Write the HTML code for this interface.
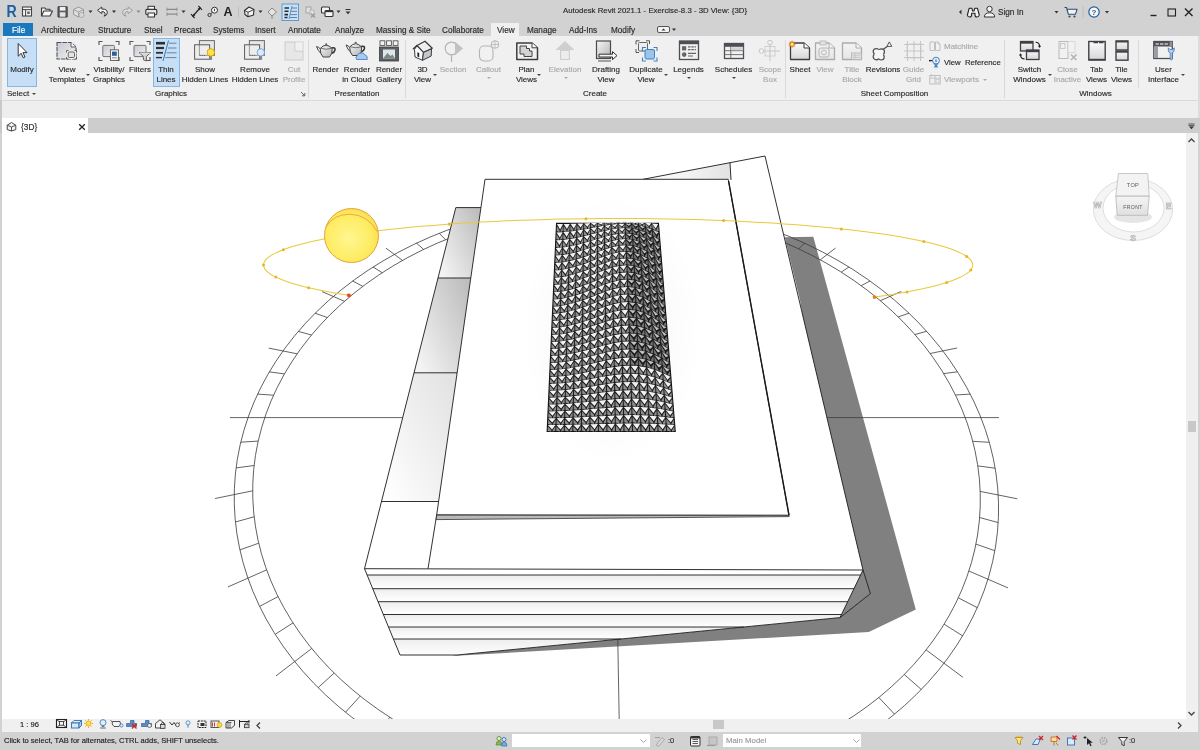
<!DOCTYPE html>
<html lang="en"><head><meta charset="utf-8"><title>Autodesk Revit 2021.1 - Exercise-8.3 - 3D View: {3D}</title>
<style>
html,body{margin:0;padding:0;}
body{width:1200px;height:750px;overflow:hidden;position:relative;background:#d2d2d2;-webkit-font-smoothing:antialiased;font-family:"Liberation Sans", sans-serif;font-size:8px;color:#2a2a2a;-webkit-text-stroke:0.15px currentColor;}
.a{position:absolute;}
.t{position:absolute;white-space:pre;line-height:10px;height:10px;}
.c{position:absolute;white-space:pre;line-height:10px;text-align:center;transform:translateX(-50%);}
.d{color:#a9a9a9;}
.sep{position:absolute;top:40px;height:58px;width:1px;background:#d9d9d9;}
.arr{position:absolute;width:0;height:0;border-left:2px solid transparent;border-right:2px solid transparent;border-top:2.5px solid #444;}
.arr.d{border-top-color:#aaa;}
.tab{position:absolute;top:24.5px;font-size:8.2px;line-height:11px;white-space:pre;}
svg{position:absolute;overflow:visible;}

</style></head><body><div id="app" style="position:absolute;left:0;top:0;width:1200px;height:750px;will-change:transform">
<div class="a" style="left:0;top:0;width:1200px;height:36px;background:#d2d2d2"></div>
<div class="a" style="left:0;top:36px;width:1200px;height:64px;background:#f0f0f0"></div>
<div class="a" style="left:0;top:100px;width:1200px;height:1px;background:#dadada"></div>
<div class="a" style="left:0;top:101px;width:1200px;height:17px;background:#eeeeee"></div>
<div class="a" style="left:0;top:118px;width:1200px;height:15px;background:#cdcdcd"></div>
<div class="a" style="left:0;top:133px;width:1200px;height:586px;background:#ffffff"></div>
<div class="t" style="left:563px;top:5.5px;font-size:7.8px">Autodesk Revit 2021.1 - Exercise-8.3 - 3D View: {3D}</div>
<div class="t" style="left:998px;top:8px;font-size:8.2px">Sign In</div>
<svg style="left:0;top:0.8px" width="1200" height="22" viewBox="0 0 1200 22"><text x="6.6" y="15.8" font-family="Liberation Sans, sans-serif" font-size="15.6" font-weight="bold" fill="#1b5f9b" textLength="10.2" lengthAdjust="spacingAndGlyphs">R</text><rect x="22.5" y="6" width="9" height="9" fill="#f5f5f5" stroke="#444" stroke-width="1.1"/><path d="M22.5 8.6h9M25.6 8.6V15" stroke="#444" stroke-width="1"/><rect x="27.2" y="10.4" width="2.6" height="2.6" fill="#666"/><path d="M41.5 15V7H45L46 8.3H50V10" fill="#f0f0f0" stroke="#3c3c3c" stroke-width="1.1" stroke-linejoin="round"/><path d="M41.5 15L43.8 10H52.5L50 15Z" fill="#f7f7f7" stroke="#3c3c3c" stroke-width="1.1" stroke-linejoin="round"/><path d="M58 5.8H67.2V16H58Z" fill="#5c5f66" stroke="#3b3d42" stroke-width="1"/><rect x="59.8" y="6" width="5.6" height="3.6" fill="#f1f1f1"/><rect x="59.8" y="11.3" width="5.6" height="4.4" fill="#e4e4e4"/><g opacity="0.45"><path d="M73.5 8.5L78.5 6L83.5 8.5V13.5L78.5 16L73.5 13.5Z" fill="#e9e9e9" stroke="#555" stroke-width="1"/><path d="M73.5 8.5L78.5 11L83.5 8.5M78.5 11V16" fill="none" stroke="#555" stroke-width="0.9"/><circle cx="81.5" cy="14" r="2.6" fill="#ddd" stroke="#666" stroke-width="0.8"/></g><path d="M88.5 9.5h4l-2 2.4z" fill="#333"/><path d="M97.5 9.3L101.8 6V8.1Q107.5 7.6 107.3 12Q107 14.6 104 15.2Q105.5 13.6 105 12Q104.5 10.3 101.8 10.6V12.6Z" fill="#f2f2f2" stroke="#3a3a3a" stroke-width="1" stroke-linejoin="round"/><path d="M112 9.5h4l-2 2.4z" fill="#333"/><g opacity="0.35"><path d="M132.5 9.3L128.2 6V8.1Q122.5 7.6 122.7 12Q123 14.6 126 15.2Q124.5 13.6 125 12Q125.5 10.3 128.2 10.6V12.6Z" fill="#f2f2f2" stroke="#3a3a3a" stroke-width="1" stroke-linejoin="round"/></g><path d="M136.5 9.5h4l-2 2.4z" fill="#888"/><rect x="148" y="5.3" width="6.5" height="3.5" fill="#fafafa" stroke="#333" stroke-width="1"/><rect x="145.8" y="8.4" width="11" height="5.4" rx="1.2" fill="#e6e6e6" stroke="#333" stroke-width="1.1"/><rect x="148" y="12" width="6.5" height="4" fill="#fafafa" stroke="#333" stroke-width="1"/><g opacity="0.5"><path d="M167 8.3h10M167 13.2h10" stroke="#444" stroke-width="1.2"/><path d="M167 6.6v3.4M177 6.6v3.4M167 11.5v3.4M177 11.5v3.4" stroke="#444" stroke-width="0.9"/></g><path d="M181.5 9.5h4l-2 2.4z" fill="#333"/><path d="M192.5 15.5L200.5 6.5" stroke="#222" stroke-width="1.2"/><path d="M191 13.2L194.6 17M198.4 5L202 8.8" stroke="#222" stroke-width="1.1"/><path d="M193 15L193.2 12.8L195.2 14.8ZM200 7L199.8 9.2L197.8 7.2Z" fill="#222"/><circle cx="214.5" cy="9.2" r="3" fill="#f5f5f5" stroke="#333" stroke-width="1"/><path d="M214.5 7.8v2.4" stroke="#333" stroke-width="0.9"/><circle cx="209.5" cy="14" r="1.6" fill="none" stroke="#333" stroke-width="1"/><path d="M210.6 12.9L212.4 11.4" stroke="#333" stroke-width="1"/><text x="228" y="15.2" font-family="Liberation Sans, sans-serif" font-size="12.5" font-weight="bold" fill="#222" text-anchor="middle">A</text><path d="M238.5 5.5v11" stroke="#bdbdbd" stroke-width="1"/><path d="M244.5 9.5L249 6L254 8.6L253.5 14L248 15.8L245 13.5Z" fill="#f4f4f4" stroke="#2f2f2f" stroke-width="1.1" stroke-linejoin="round"/><path d="M244.5 9.5L248 11.2L254 8.6M248 11.2V15.8" fill="none" stroke="#2f2f2f" stroke-width="0.9"/><path d="M258.5 9.5h4l-2 2.4z" fill="#333"/><g opacity="0.6"><path d="M268 11L272 7L276.5 11L272 15Z" fill="#f1f1f1" stroke="#555" stroke-width="1"/><path d="M272 15V18" stroke="#555" stroke-width="1"/></g><rect x="282" y="3" width="16.5" height="16.5" fill="#c9e0f7" stroke="#5b9bd5" stroke-width="1"/><path d="M284.5 7h4.5M284.5 10.3h4M284.5 13.6h3.5M284.5 16.5h3" stroke="#2b2b2b" stroke-width="1.6"/><path d="M292 5L289 18" stroke="#3b78b5" stroke-width="0.8"/><path d="M292 7h5M291.3 10.3h5.7M290.5 13.6h6.5M290 16.5h7" stroke="#48688c" stroke-width="0.8"/><g opacity="0.4"><rect x="306" y="6" width="5" height="6" fill="#f5f5f5" stroke="#555" stroke-width="0.9"/><rect x="310" y="9" width="4" height="5" fill="#f5f5f5" stroke="#777" stroke-width="0.7"/><path d="M311 12.5L315 16.5M315 12.5L311 16.5" stroke="#444" stroke-width="1.1"/></g><rect x="321.5" y="6" width="8" height="6" rx="1" fill="#f5f5f5" stroke="#333" stroke-width="1.1"/><rect x="325" y="9.5" width="8" height="6" rx="1" fill="#f5f5f5" stroke="#333" stroke-width="1.1"/><path d="M325 10.5h8" stroke="#333" stroke-width="1.3"/><path d="M336.5 9.5h4l-2 2.4z" fill="#333"/><path d="M345.5 8.5h5" stroke="#333" stroke-width="1"/><path d="M345.5 10.5h5l-2.5 2.8z" fill="#333"/><path d="M961.5 8.5L959 11L961.5 13.5Z" fill="#333"/><path d="M969.2 7.2h2.6L972.6 10H974L974.8 7.2h2.6L979.3 14Q979 16 977 16Q975 16 975 14V12.3H971.6V14Q971.6 16 969.6 16Q967.6 16 967.4 14Z" fill="#f3f3f3" stroke="#222" stroke-width="1.1" stroke-linejoin="round"/><circle cx="989.5" cy="8" r="2.7" fill="#f6f6f6" stroke="#333" stroke-width="1"/><path d="M984.3 16Q984.5 11.8 989.5 11.8Q994.5 11.8 994.7 16Z" fill="#f6f6f6" stroke="#333" stroke-width="1"/><path d="M1054.5 10h4l-2 2.4z" fill="#333"/><path d="M1064.5 6.5H1066.5L1068.3 13.2H1075.5L1077 8.3H1067" fill="#f3f3f3" stroke="#2a4e77" stroke-width="1.1" stroke-linejoin="round"/><circle cx="1069.5" cy="15.5" r="1.1" fill="#2a4e77"/><circle cx="1074.5" cy="15.5" r="1.1" fill="#2a4e77"/><path d="M1083 5.5v11" stroke="#bdbdbd" stroke-width="1"/><circle cx="1094" cy="11" r="5.2" fill="#f8f8f8" stroke="#1f5c99" stroke-width="1.2"/><text x="1094" y="14" font-family="Liberation Sans, sans-serif" font-size="8" font-weight="bold" fill="#1f5c99" text-anchor="middle">?</text><path d="M1105 10h4l-2 2.4z" fill="#333"/><path d="M1150.5 14.5h6" stroke="#222" stroke-width="1.4"/><rect x="1168" y="8" width="7.5" height="7" fill="none" stroke="#222" stroke-width="1.1"/><path d="M1185 7.5L1192.5 15M1192.5 7.5L1185 15" stroke="#222" stroke-width="1.4"/></svg>
<div class="a" style="left:3px;top:23px;width:30px;height:13px;background:#1c78bd"></div>
<div class="tab" style="left:12px;color:#fff">File</div>
<div class="a" style="left:491px;top:23px;width:28px;height:13px;background:#f0f0f0"></div>
<div class="tab" style="left:41px">Architecture</div>
<div class="tab" style="left:98px">Structure</div>
<div class="tab" style="left:144px">Steel</div>
<div class="tab" style="left:174px">Precast</div>
<div class="tab" style="left:213px">Systems</div>
<div class="tab" style="left:255px">Insert</div>
<div class="tab" style="left:288px">Annotate</div>
<div class="tab" style="left:335px">Analyze</div>
<div class="tab" style="left:376px">Massing &amp; Site</div>
<div class="tab" style="left:442px">Collaborate</div>
<div class="tab" style="left:497px">View</div>
<div class="tab" style="left:527px">Manage</div>
<div class="tab" style="left:569px">Add-Ins</div>
<div class="tab" style="left:611px">Modify</div>
<svg style="left:656px;top:26px" width="24" height="8" viewBox="0 0 24 8"><rect x="1.5" y="0.5" width="12" height="6" rx="1.5" fill="#f4f4f4" stroke="#444" stroke-width="0.9"/><path d="M5.5 4.6 L7.5 2.4 L9.5 4.6Z" fill="#333"/><path d="M16 2.5h4l-2 2.5z" fill="#333"/></svg>
<div class="a" style="left:7px;top:38px;width:28px;height:46.5px;background:#c6dff6;border:1px solid #86b7e4;box-sizing:content-box"></div>
<div class="a" style="left:153px;top:38px;width:24.5px;height:46.5px;background:#c6dff6;border:1px solid #86b7e4"></div>
<div class="sep" style="left:308px"></div>
<div class="sep" style="left:405px"></div>
<div class="sep" style="left:785px"></div>
<div class="sep" style="left:1004px"></div>
<div class="sep" style="left:1138px;height:48px"></div>
<div class="a" style="left:1198px;top:36px;width:2px;height:82px;background:#dcdcdc"></div>
<div class="a" style="left:0;top:36px;width:2px;height:64px;background:#d9d9d9"></div>
<div class="a" style="left:0;top:100px;width:2px;height:33px;background:#c9c9c9"></div>
<div class="c" style="left:22px;top:65px">Modify</div>
<svg width="0" height="0" style="left:0;top:0"><defs><linearGradient id="ig" x1="0" y1="0" x2="1" y2="1"><stop offset="0" stop-color="#f6f6f6"/><stop offset="1" stop-color="#b4b4b4"/></linearGradient><linearGradient id="ig2" x1="0" y1="0" x2="0" y2="1"><stop offset="0" stop-color="#fafafa"/><stop offset="1" stop-color="#d6d6d6"/></linearGradient><linearGradient id="ig3" x1="0" y1="0" x2="1" y2="1"><stop offset="0" stop-color="#c6cbd3"/><stop offset="1" stop-color="#f0f0f0"/></linearGradient></defs></svg><svg style="left:10px;top:39px" width="24" height="24" viewBox="0 0 24 24"><path d="M8.2 4.5V17.2L11.2 14.3L13.2 18.8L15 18L13 13.6H17Z" fill="#fff" stroke="#333" stroke-width="1" stroke-linejoin="round"/></svg>
<div class="c" style="left:67px;top:65px">View<br>Templates</div>
<div class="arr" style="left:85.5px;top:73.5px"></div>
<svg style="left:55px;top:39px" width="24" height="24" viewBox="0 0 24 24"><path d="M2 3.5H16L21 8V20H2Z" fill="url(#ig3)" stroke="#555" stroke-width="1.1" stroke-dasharray="4.5 0.9"/><path d="M16 3.5V8H21" fill="#f6f6f6" stroke="#555" stroke-width="0.9"/><rect x="11.5" y="11.5" width="9.5" height="8.5" fill="#f0f0f0"/><rect x="13.2" y="13" width="6.3" height="5.5" rx="1.3" fill="#e4e4e4" stroke="#555" stroke-width="0.9"/><path d="M11.5 13.5V11.5H13.5M19.5 11.5H21.5V13.5M21.5 18V20H19.5M13.5 20H11.5V18" fill="none" stroke="#555" stroke-width="0.9"/></svg>
<div class="c" style="left:109px;top:65px">Visibility/<br>Graphics</div>
<svg style="left:97px;top:39px" width="24" height="24" viewBox="0 0 24 24"><path d="M2 6V2.5H5.5M18.5 2.5H22V6M22 18V21.5H18.5M5.5 21.5H2V18" fill="none" stroke="#555" stroke-width="1.1"/><rect x="5.8" y="6.4" width="11.6" height="11.2" rx="1" fill="url(#ig3)" stroke="#666" stroke-width="0.9"/><rect x="13.4" y="10.8" width="8" height="10.6" fill="#f7f7f7" stroke="#555" stroke-width="0.9"/><rect x="15" y="12.6" width="4.8" height="4.2" fill="#2f5f9a"/><path d="M15 18.8h4.8" stroke="#777" stroke-width="0.9"/></svg>
<div class="c" style="left:140px;top:65px">Filters</div>
<svg style="left:128px;top:39px" width="24" height="24" viewBox="0 0 24 24"><path d="M2 6V2.5H5.5M18.5 2.5H22V6M22 18V21.5H18.5M5.5 21.5H2V18" fill="none" stroke="#555" stroke-width="1.1"/><rect x="6" y="6.4" width="12" height="11.2" rx="1" fill="url(#ig3)" stroke="#666" stroke-width="0.9"/><path d="M11.2 13.6H22.6L18.4 17.6V22L15.4 20.8V17.6Z" fill="#d4d4d4" stroke="#555" stroke-width="0.9" stroke-linejoin="round"/><path d="M12 14.1h9.8" stroke="#f6f6f6" stroke-width="0.8"/></svg>
<div class="c" style="left:166px;top:65px">Thin<br>Lines</div>
<svg style="left:154px;top:39px" width="24" height="24" viewBox="0 0 24 24"><path d="M2 4.2h9" stroke="#2e2e2e" stroke-width="2.6"/><path d="M2 9h8" stroke="#2e2e2e" stroke-width="2.2"/><path d="M2 13.8h7" stroke="#2e2e2e" stroke-width="1.8"/><path d="M2 18.6h6" stroke="#2e2e2e" stroke-width="1.4"/><path d="M14.5 1.5L9 22" stroke="#3b78b5" stroke-width="1"/><path d="M15 4.2h7.5M14 9h8.5M12.6 13.8h10M11.3 18.6h11.2" stroke="#4a6d92" stroke-width="0.8"/></svg>
<div class="c" style="left:205px;top:65px">Show<br>Hidden Lines</div>
<svg style="left:193px;top:39px" width="24" height="24" viewBox="0 0 24 24"><rect x="6.4" y="1.6" width="15" height="14.8" fill="#e6e6e6" stroke="#6a6a6a" stroke-width="1"/><rect x="1.6" y="5.8" width="15" height="14.4" fill="#ededed" fill-opacity="0.85" stroke="#5a5a5a" stroke-width="1"/><path d="M6.4 5.8V16.4H16.6" fill="none" stroke="#8a8a8a" stroke-width="0.8"/><path d="M6.5 16.4H13" stroke="#555" stroke-width="0.8" stroke-dasharray="1.2 1"/><rect x="16.5" y="16.5" width="2.6" height="4.6" rx="0.8" fill="#8a8a8a"/><circle cx="17.8" cy="13.4" r="3.7" fill="#ffe24a" stroke="#d6a400" stroke-width="0.9"/></svg>
<div class="c" style="left:255px;top:65px">Remove<br>Hidden Lines</div>
<svg style="left:243px;top:39px" width="24" height="24" viewBox="0 0 24 24"><rect x="6.4" y="1.6" width="15" height="14.8" fill="#e6e6e6" stroke="#6a6a6a" stroke-width="1"/><rect x="1.6" y="5.8" width="15" height="14.4" fill="#ededed" fill-opacity="0.85" stroke="#5a5a5a" stroke-width="1"/><path d="M6.4 5.8V16.4H16.6" fill="none" stroke="#8a8a8a" stroke-width="0.8"/><path d="M6.5 16.4H13" stroke="#555" stroke-width="0.8" stroke-dasharray="1.2 1"/><rect x="16.5" y="16.5" width="2.6" height="4.6" rx="0.8" fill="#8a8a8a"/><circle cx="17.8" cy="13.4" r="3.7" fill="#dbe9fa" stroke="#6f9fd6" stroke-width="0.9"/></svg>
<div class="c d" style="left:294px;top:65px">Cut<br>Profile</div>
<svg style="left:282px;top:39px" width="24" height="24" viewBox="0 0 24 24" opacity="0.38"><rect x="3" y="3" width="18" height="18" fill="#dadada" stroke="#8a8a8a" stroke-width="0.9"/><path d="M13 3V12H21" fill="none" stroke="#777" stroke-width="0.9"/><rect x="13.4" y="3.4" width="7.2" height="8.2" fill="#f2f2f2"/></svg>
<div class="c" style="left:325.5px;top:65px">Render</div>
<svg style="left:313.5px;top:39px" width="24" height="24" viewBox="0 0 24 24"><path d="M6 9.5Q4.5 8 2.5 7.5Q4 12 7 14.5" fill="#f4f4f4" stroke="#444" stroke-width="1"/><path d="M17.5 9Q21.5 8 21 11Q20.5 13.5 17.5 14.5" fill="none" stroke="#333" stroke-width="1.5"/><path d="M6.2 9.5Q6 15 9 18H15.5Q18.6 15 18.2 9.5Q15 6.3 12.2 6.2Q9 6.3 6.2 9.5Z" fill="url(#ig)" stroke="#444" stroke-width="1"/><path d="M7 9.3Q12.2 11.2 17.6 9.3" fill="none" stroke="#555" stroke-width="0.8"/><circle cx="12.2" cy="5.3" r="1.1" fill="#666"/></svg>
<div class="c" style="left:357px;top:65px">Render<br>in Cloud</div>
<svg style="left:345px;top:39px" width="24" height="24" viewBox="0 0 24 24"><g transform="translate(-1.5,-1.5)"><path d="M6 9.5Q4.5 8 2.5 7.5Q4 12 7 14.5" fill="#f4f4f4" stroke="#444" stroke-width="1"/><path d="M17.5 9Q21.5 8 21 11Q20.5 13.5 17.5 14.5" fill="none" stroke="#333" stroke-width="1.5"/><path d="M6.2 9.5Q6 15 9 18H15.5Q18.6 15 18.2 9.5Q15 6.3 12.2 6.2Q9 6.3 6.2 9.5Z" fill="url(#ig)" stroke="#444" stroke-width="1"/><path d="M7 9.3Q12.2 11.2 17.6 9.3" fill="none" stroke="#555" stroke-width="0.8"/><circle cx="12.2" cy="5.3" r="1.1" fill="#666"/></g><path d="M11.5 20.5Q9.8 18 12.4 16.6Q13 13.6 16.2 14.2Q18.6 13 19.8 15.8Q22.8 16.2 22.3 20.5Z" fill="#a9c8ee" stroke="#4c83c7" stroke-width="0.9"/></svg>
<div class="c" style="left:389px;top:65px">Render<br>Gallery</div>
<svg style="left:377px;top:39px" width="24" height="24" viewBox="0 0 24 24"><rect x="2.5" y="8" width="19" height="14" fill="#5b5f66" stroke="#3b3b3b" stroke-width="0.8"/><rect x="3" y="1.8" width="4.8" height="4.6" fill="#f3f3f3" stroke="#555" stroke-width="0.9"/><rect x="9.6" y="1.8" width="4.8" height="4.6" fill="#f3f3f3" stroke="#555" stroke-width="0.9"/><rect x="16.2" y="1.8" width="4.8" height="4.6" fill="#f3f3f3" stroke="#555" stroke-width="0.9"/><rect x="6" y="10.5" width="12" height="9" fill="#dfe6ea"/><path d="M6 19.5L10.5 14L13.5 17L15.5 15.5L18 19.5Z" fill="#7b8a80"/></svg>
<div class="c" style="left:422.5px;top:65px">3D<br>View</div>
<div class="arr" style="left:432.5px;top:73.5px"></div>
<svg style="left:410.5px;top:39px" width="24" height="24" viewBox="0 0 24 24"><path d="M6 6.5L3.5 10.5L4 18L11.5 21.3L12.5 13.2Z" fill="#fbfbfb" stroke="#3a3a3a" stroke-width="1" stroke-linejoin="round"/><path d="M12.5 13.2L20.5 9.7L20.2 17L11.5 21.3Z" fill="#c4c7cc" stroke="#3a3a3a" stroke-width="1" stroke-linejoin="round"/><path d="M6 6.5L14 2.2L21.3 9.2L12.5 13.3Z" fill="#eceef0" stroke="#3a3a3a" stroke-width="1.2" stroke-linejoin="round"/><path d="M6 6.5L2.4 9.8" stroke="#3a3a3a" stroke-width="1.5" stroke-linecap="round"/><rect x="6.4" y="13.3" width="1.8" height="4.4" fill="#1e1e1e" transform="skewY(22) translate(0,-2.7)"/></svg>
<div class="c d" style="left:453px;top:65px">Section</div>
<svg style="left:441px;top:39px" width="24" height="24" viewBox="0 0 24 24" opacity="0.38"><circle cx="10.5" cy="9.5" r="6.3" fill="#f2f2f2" stroke="#555" stroke-width="1.2"/><path d="M14 2.8L22 9.5L14 16.2Z" fill="#777"/><path d="M10.5 16V23" stroke="#555" stroke-width="1.2"/></svg>
<div class="c d" style="left:488.5px;top:65px">Callout</div>
<div class="arr d" style="left:486.5px;top:77px"></div>
<svg style="left:476.5px;top:39px" width="24" height="24" viewBox="0 0 24 24" opacity="0.38"><rect x="2.5" y="7" width="13.5" height="15" rx="4.5" fill="#f3f3f3" stroke="#555" stroke-width="1.1"/><circle cx="18" cy="5.5" r="3.8" fill="#f3f3f3" stroke="#555" stroke-width="1"/><path d="M14.2 5.5h7.6M18 1.7v7.6" stroke="#555" stroke-width="0.8"/></svg>
<div class="c" style="left:526.5px;top:65px">Plan<br>Views</div>
<div class="arr" style="left:537px;top:73.5px"></div>
<svg style="left:514.5px;top:39px" width="24" height="24" viewBox="0 0 24 24"><path d="M1.8 4H17L22.5 8.8V20.5H1.8Z" fill="#f1f1f1" stroke="#3d3d3d" stroke-width="1.5" stroke-linejoin="round"/><path d="M17 4V8.8H22.5" fill="#fff" stroke="#3d3d3d" stroke-width="1"/><path d="M5 7H11.5V9.5H14.5V12H17V17.5H9V15H5Z" fill="#d4d4d4" stroke="#444" stroke-width="1"/></svg>
<div class="c d" style="left:565px;top:65px">Elevation</div>
<div class="arr d" style="left:564px;top:77px"></div>
<svg style="left:553px;top:39px" width="24" height="24" viewBox="0 0 24 24" opacity="0.38"><path d="M12 2L21.5 11H17V21H7V11H2.5Z" fill="#9a9a9a"/><rect x="8.2" y="12" width="7.6" height="8" fill="#e9e9e9"/></svg>
<div class="c" style="left:606px;top:65px">Drafting<br>View</div>
<svg style="left:594px;top:39px" width="24" height="24" viewBox="0 0 24 24"><rect x="2.5" y="2" width="14" height="17.5" fill="url(#ig)" stroke="#4a4a4a" stroke-width="1.2"/><path d="M4 22H17" stroke="#555" stroke-width="1"/><path d="M5 15.2H18.5V12.6L23 16.6L18.5 20.6V18H5Z" fill="#f5f5f5" stroke="#333" stroke-width="1" stroke-linejoin="round"/></svg>
<div class="c" style="left:646px;top:65px">Duplicate<br>View</div>
<div class="arr" style="left:664px;top:73.5px"></div>
<svg style="left:634px;top:39px" width="24" height="24" viewBox="0 0 24 24"><rect x="4.5" y="3.5" width="9" height="8.5" rx="1" fill="#eee" stroke="#666" stroke-width="1"/><path d="M2 5.5V1.8H5.5M12 1.8H15.5V5" fill="none" stroke="#555" stroke-width="1"/><path d="M2 10V13.5H5" fill="none" stroke="#555" stroke-width="1"/><rect x="11" y="10.5" width="9.5" height="9.5" rx="1.5" fill="#9cc3ea" stroke="#3f82c4" stroke-width="1"/><path d="M8.5 12.5V8.5H12M19.5 8.5H23V12M23 18.5V22H19.5M12 22H8.5V18.5" fill="none" stroke="#3f82c4" stroke-width="1.1"/></svg>
<div class="c" style="left:688.5px;top:65px">Legends</div>
<div class="arr" style="left:687px;top:77px"></div>
<svg style="left:676.5px;top:39px" width="24" height="24" viewBox="0 0 24 24"><rect x="2.5" y="2" width="19" height="18.5" fill="#f1f1f1" stroke="#4d4f55" stroke-width="1.3"/><rect x="2.5" y="2" width="19" height="3.2" fill="#4d4f55"/><rect x="5" y="7.2" width="4.2" height="4.2" fill="#666"/><path d="M11 7.8h8M11 10.6h8" stroke="#666" stroke-width="1.2" stroke-dasharray="2.5 0.8"/><circle cx="7.2" cy="15.6" r="2.3" fill="#666"/><path d="M11 14.4h8M11 17h5" stroke="#666" stroke-width="1.1"/></svg>
<div class="c" style="left:733.5px;top:65px">Schedules</div>
<div class="arr" style="left:731.5px;top:77px"></div>
<svg style="left:721.5px;top:39px" width="24" height="24" viewBox="0 0 24 24"><rect x="2.5" y="4.5" width="19" height="15" fill="#f1f1f1" stroke="#4d4f55" stroke-width="1.3"/><rect x="2.5" y="4.5" width="19" height="3.3" fill="#4d4f55"/><path d="M2.5 11.7h19M2.5 15.6h19M8.8 7.8v11.7" stroke="#666" stroke-width="0.9"/><rect x="9.3" y="8.2" width="11.8" height="3" fill="#cfd3da"/></svg>
<div class="c d" style="left:770px;top:65px">Scope<br>Box</div>
<svg style="left:758px;top:39px" width="24" height="24" viewBox="0 0 24 24" opacity="0.38"><path d="M2 12H22M12 4V22" stroke="#777" stroke-width="0.9"/><circle cx="12" cy="3.6" r="2.3" fill="#f4f4f4" stroke="#777" stroke-width="0.9"/><circle cx="3.4" cy="12" r="2.3" fill="#f4f4f4" stroke="#777" stroke-width="0.9"/><rect x="7" y="7.5" width="10" height="9.5" fill="none" stroke="#888" stroke-width="0.8"/></svg>
<div class="c" style="left:800px;top:65px">Sheet</div>
<svg style="left:788px;top:39px" width="24" height="24" viewBox="0 0 24 24"><path d="M2.5 4H16L21.5 9V20.5H2.5Z" fill="url(#ig2)" stroke="#3d3d3d" stroke-width="1.3" stroke-linejoin="round"/><path d="M16 4V9H21.5" fill="#fff" stroke="#3d3d3d" stroke-width="1"/><g transform="translate(1.2,1.2) scale(0.72)"><path d="M4 0.8L5.1 3L7.4 2.2L6.6 4.5L8.8 5.6L6.6 6.7L7.4 9L5.1 8.2L4 10.4L2.9 8.2L0.6 9L1.4 6.7L-0.8 5.6L1.4 4.5L0.6 2.2L2.9 3Z" fill="#f39a1d" stroke="#c96d00" stroke-width="0.6"/><circle cx="4" cy="5.6" r="1.7" fill="#fff2c8"/></g></svg>
<div class="c d" style="left:825px;top:65px">View</div>
<svg style="left:813px;top:39px" width="24" height="24" viewBox="0 0 24 24" opacity="0.38"><path d="M2.5 4H16L21.5 9V20.5H2.5Z" fill="url(#ig2)" stroke="#3d3d3d" stroke-width="1.3" stroke-linejoin="round"/><path d="M16 4V9H21.5" fill="#fff" stroke="#3d3d3d" stroke-width="1"/><rect x="6" y="9" width="10" height="9" rx="2" fill="#e9e9e9" stroke="#555" stroke-width="1"/><circle cx="11" cy="13.5" r="2.4" fill="none" stroke="#555" stroke-width="0.9"/><rect x="7" y="2" width="6" height="4" fill="#ccc" stroke="#555" stroke-width="0.8"/></svg>
<div class="c d" style="left:852px;top:65px">Title<br>Block</div>
<svg style="left:840px;top:39px" width="24" height="24" viewBox="0 0 24 24" opacity="0.38"><path d="M2.5 4H16L21.5 9V20.5H2.5Z" fill="url(#ig2)" stroke="#3d3d3d" stroke-width="1.3" stroke-linejoin="round"/><path d="M16 4V9H21.5" fill="#fff" stroke="#3d3d3d" stroke-width="1"/><rect x="11.5" y="14" width="10" height="6.5" fill="#cfcfcf" stroke="#555" stroke-width="0.8"/><path d="M11.5 16.2h10M11.5 18.4h10M15 14v6.5" stroke="#666" stroke-width="0.6"/></svg>
<div class="c" style="left:883px;top:65px">Revisions</div>
<svg style="left:871px;top:39px" width="24" height="24" viewBox="0 0 24 24"><g fill="#f6f6f6" stroke="#4f4f4f" stroke-width="1.2"><circle cx="5.2" cy="12.6" r="3"/><circle cx="10.5" cy="12.8" r="3"/><circle cx="5.2" cy="17.8" r="3"/><circle cx="10.2" cy="18" r="3"/></g><path d="M5.2 10.8L10.5 11L12.2 15.3L10.2 19.4L5.2 19.2L3.6 15.3Z" fill="#f6f6f6"/><path d="M11.6 10.8L17.6 6.4" stroke="#4f4f4f" stroke-width="1.2"/><path d="M18.3 2.9L20.8 7.4H15.9Z" fill="#f6f6f6" stroke="#555" stroke-width="1" stroke-linejoin="round"/></svg>
<div class="c d" style="left:913.5px;top:65px">Guide<br>Grid</div>
<svg style="left:901.5px;top:39px" width="24" height="24" viewBox="0 0 24 24" opacity="0.38"><path d="M2 5.5H22M2 12H22M2 18.5H22M5.5 2V22M12 2V22M18.5 2V22" stroke="#777" stroke-width="0.9"/><rect x="4.5" y="4.5" width="15" height="15" fill="none" stroke="#888" stroke-width="0.6" stroke-dasharray="1.5 1"/></svg>
<div class="c" style="left:1029.5px;top:65px">Switch<br>Windows</div>
<div class="arr" style="left:1047.5px;top:73.5px"></div>
<svg style="left:1017.5px;top:39px" width="24" height="24" viewBox="0 0 24 24"><rect x="2.5" y="2.5" width="12.5" height="9.5" fill="url(#ig2)" stroke="#3f4146" stroke-width="1.3"/><rect x="2.5" y="2.5" width="12.5" height="2.2" fill="#3f4146"/><rect x="8.5" y="11" width="12.5" height="9.5" fill="url(#ig2)" stroke="#3f4146" stroke-width="1.3"/><rect x="8.5" y="11" width="12.5" height="2.2" fill="#3f4146"/><path d="M17.5 3.2Q21.6 3.2 21.6 7.6" fill="none" stroke="#222" stroke-width="1.1"/><path d="M19.9 6.8L21.6 9L23.2 6.8Z" fill="#222"/><path d="M6.6 20Q2.5 20 2.5 15.6" fill="none" stroke="#222" stroke-width="1.1"/><path d="M0.9 16.4L2.5 14.2L4.2 16.4Z" fill="#222"/></svg>
<div class="c d" style="left:1067.5px;top:65px">Close<br>Inactive</div>
<svg style="left:1055.5px;top:39px" width="24" height="24" viewBox="0 0 24 24" opacity="0.38"><rect x="3" y="2.5" width="9" height="17" fill="#f3f3f3" stroke="#666" stroke-width="1"/><rect x="4.5" y="4.5" width="4.5" height="5" fill="none" stroke="#777" stroke-width="0.8"/><rect x="12" y="2.5" width="7" height="11" fill="#f6f6f6" stroke="#999" stroke-width="0.7"/><path d="M15 15.5L20.5 21M20.5 15.5L15 21" stroke="#555" stroke-width="1.6"/></svg>
<div class="c" style="left:1096.5px;top:65px">Tab<br>Views</div>
<svg style="left:1084.5px;top:39px" width="24" height="24" viewBox="0 0 24 24"><rect x="3.8" y="2.5" width="16.4" height="18.5" fill="url(#ig2)" stroke="#3f4146" stroke-width="1.4"/><path d="M3.8 20.6h16.4" stroke="#3f4146" stroke-width="1.6"/><path d="M8.5 3.3h4.5M14 3.3h4.5" stroke="#3f4146" stroke-width="1.8"/></svg>
<div class="c" style="left:1121.5px;top:65px">Tile<br>Views</div>
<svg style="left:1109.5px;top:39px" width="24" height="24" viewBox="0 0 24 24"><rect x="6" y="2" width="12" height="9" fill="url(#ig2)" stroke="#3f4146" stroke-width="1.4"/><path d="M6 2.6h12" stroke="#3f4146" stroke-width="1.8"/><rect x="6" y="12.2" width="12" height="9" fill="url(#ig2)" stroke="#3f4146" stroke-width="1.4"/><path d="M6 12.8h12" stroke="#3f4146" stroke-width="1.8"/></svg>
<div class="c" style="left:1163.5px;top:65px">User<br>Interface</div>
<div class="arr" style="left:1180.5px;top:73.5px"></div>
<svg style="left:1151.5px;top:39px" width="24" height="24" viewBox="0 0 24 24"><rect x="1.8" y="2.5" width="18.5" height="17" fill="#f1f1f1" stroke="#4d4f55" stroke-width="1.3"/><rect x="1.8" y="2.5" width="18.5" height="5" fill="#4d4f55"/><path d="M3.5 5h3.4M8 5h3.4M12.5 5h3.4" stroke="#c9c9c9" stroke-width="1.3"/><rect x="2.4" y="7.5" width="3.6" height="11.5" fill="#9a9da3"/><rect x="17.5" y="2.5" width="2.8" height="5" fill="#8d9096"/><path d="M16.3 8.8V11.2Q16.3 13.3 18.2 13.8V20.4Q19.2 21.6 20.2 20.4V13.8Q22.2 13.3 22.2 11.2V8.8L20.6 10.6H17.9Z" fill="#b9d1ec" stroke="#4c7fb8" stroke-width="0.9" stroke-linejoin="round"/></svg>
<div class="t d" style="left:944px;top:42px">Matchline</div>
<div class="t" style="left:944px;top:58px;font-size:7.75px">View  Reference</div>
<div class="t d" style="left:944px;top:75px">Viewports</div>
<div class="arr d" style="left:983px;top:79px"></div>
<svg style="left:929px;top:40px" width="12" height="12" viewBox="0 0 12 12" opacity="0.38"><path d="M1 2H5.5V10.5H1ZM6.5 2H9L11 4V10.5H6.5Z" fill="#f3f3f3" stroke="#666" stroke-width="0.9"/><path d="M9 2V4H11" fill="none" stroke="#666" stroke-width="0.7"/></svg>
<svg style="left:929px;top:56px" width="12" height="12" viewBox="0 0 12 12"><circle cx="7" cy="4.6" r="3.4" fill="#eef4fb" stroke="#3f7cc0" stroke-width="1"/><path d="M7 3V6.2M5.8 5h2.4" stroke="#3f7cc0" stroke-width="0.8"/><path d="M0.3 4.6H3.4" stroke="#333" stroke-width="1.2"/><circle cx="0.9" cy="4.6" r="0.9" fill="#222"/><path d="M5.5 8L8.5 11.5M8.5 8L5.5 11.5" stroke="#3f7cc0" stroke-width="1.2"/></svg>
<svg style="left:929px;top:73px" width="12" height="12" viewBox="0 0 12 12" opacity="0.38"><rect x="0.8" y="2.5" width="10.4" height="8.5" fill="#f0f0f0" stroke="#666" stroke-width="0.9"/><path d="M2.5 1V3.5M6 2.5V11M0.8 5.2H11.2" stroke="#666" stroke-width="0.8"/><rect x="7" y="6.3" width="3" height="3" fill="none" stroke="#777" stroke-width="0.6"/></svg>
<div class="c" style="left:171px;top:89px">Graphics</div>
<div class="c" style="left:357px;top:89px">Presentation</div>
<div class="c" style="left:595px;top:89px">Create</div>
<div class="c" style="left:894.5px;top:89px">Sheet Composition</div>
<div class="c" style="left:1095.5px;top:89px">Windows</div>
<div class="t" style="left:7px;top:89px">Select</div>
<div class="arr" style="left:32px;top:93px"></div>
<svg style="left:300px;top:91px" width="6" height="6" viewBox="0 0 6 6"><path d="M1 1L4.5 4.5M4.8 2v2.8H2" stroke="#555" stroke-width="0.9" fill="none"/></svg>
<div class="a" style="left:2px;top:118px;width:86px;height:15px;background:#fff"></div>
<div class="t" style="left:21px;top:121.8px;font-size:8.3px">{3D}</div>
<svg style="left:5.5px;top:120.5px" width="11" height="11" viewBox="0 0 11 11"><path d="M1.2 4.2L5.5 1.5L9.8 4.2V8.6L5.5 10L1.2 8.6Z" fill="#f3f3f3" stroke="#444" stroke-width="1"/><path d="M1.2 4.2L5.5 6L9.8 4.2M5.5 6V10" fill="none" stroke="#444" stroke-width="0.9"/></svg>
<svg style="left:77.5px;top:122.8px" width="8" height="8" viewBox="0 0 8 8"><path d="M1.2 1.2L6.8 6.8M6.8 1.2L1.2 6.8" stroke="#222" stroke-width="1.3"/></svg>
<svg style="left:1188px;top:123px" width="7" height="7" viewBox="0 0 7 7"><path d="M0.5 1h6M0.5 2.6h6" stroke="#333" stroke-width="0.8"/><path d="M1 3.6h5L3.5 6.2z" fill="#333"/></svg>
<svg style="left:0;top:133px;overflow:hidden" width="1200" height="586" viewBox="0 133 1200 586">
<defs>
<linearGradient id="gs" x1="0" x2="1" y1="0.8" y2="0.1"><stop offset="0" stop-color="#f4f4f4"/><stop offset="1" stop-color="#bcbcbc"/></linearGradient>
<linearGradient id="gs2" x1="0" x2="1" y1="0.9" y2="0.1"><stop offset="0" stop-color="#ffffff"/><stop offset="1" stop-color="#e2e2e2"/></linearGradient>
<linearGradient id="gt" x1="0" x2="1" y1="0" y2="0"><stop offset="0" stop-color="#ffffff"/><stop offset="0.5" stop-color="#f4f4f4"/><stop offset="1" stop-color="#e2e2e2"/></linearGradient>
<linearGradient id="gf" x1="0" x2="0" y1="0" y2="1"><stop offset="0" stop-color="#ededed"/><stop offset="0.7" stop-color="#fafafa"/><stop offset="1" stop-color="#ffffff"/></linearGradient>
<radialGradient id="sun" cx="0.45" cy="0.55" r="0.6"><stop offset="0" stop-color="#fff690"/><stop offset="0.7" stop-color="#fdec62"/><stop offset="1" stop-color="#f8dc4c"/></radialGradient>
<radialGradient id="lsh" cx="0.5" cy="0.5" r="0.5"><stop offset="0.55" stop-color="#000" stop-opacity="0.02"/><stop offset="1" stop-color="#000" stop-opacity="0"/></radialGradient>
<linearGradient id="cube1" x1="0" x2="0" y1="0" y2="1"><stop offset="0" stop-color="#f4f4f4"/><stop offset="1" stop-color="#e0e0e0"/></linearGradient>
</defs>
<polygon points="784.8,237.3 813.3,236.8 915.8,609.6 868.8,632 452,656 700,600 840,560 800,300" fill="#808080"/>
<g fill="none" stroke="#3c3c3c" stroke-width="0.8"><ellipse cx="616.4" cy="503.2" rx="382.3" ry="301.7" transform="rotate(2.15 616.4 503.2)"/><ellipse cx="616.5" cy="495.3" rx="363.9" ry="287.2" transform="rotate(1.83 616.5 495.3)"/><path d="M955.5 395L970.2 394.1M943.7 373.6L957.4 371.8M930.1 353.5L957.1 348M914.9 334.5L926.6 331.3M898.2 316.9L909 313.2M880.3 300.7L901.3 291.4M861.2 285.7L870 281M841.2 272.1L849 267M820.3 259.8L835.5 248.1M798.6 248.8L804.7 243.2M776.3 239.2L781.5 233.4M753.4 230.8L763.3 217.6M730.2 223.8L733.8 217.7M706.5 218.1L709.4 211.8M682.6 213.6L687.3 199.6M658.5 210.5L659.9 204M634.3 208.6L634.9 202M585.8 208.7L584.9 202M561.7 210.7L560 203.9M537.8 213.9L532.4 199.6M514.1 218.4L510.7 211.7M490.7 224.2L486.5 217.5M467.8 231.3L457.1 217.6M445.4 239.7L439.3 233.3M423.6 249.4L416.5 243.1M402.5 260.4L386 248.2M382.2 272.7L373.1 267M362.8 286.3L352.7 281M344.5 301.3L322 291.6M327.3 317.5L315.1 313.2M311.5 335L298.3 331.4M297.1 353.8L268.7 348.1M284.4 373.9L269.3 371.9M273.6 395.2L257.6 394.1M258.2 441.1L240.8 442.2M254.1 465.5L236.1 467.9M252.7 490.8L215.1 498.5M254.1 516.8L235.4 522M258.7 543.2L239.9 549.9M266.6 569.9L228 586.9M278 596.6L259.6 606.4M293 622.9L275.2 634.3M311.7 648.5L276 675.9M334.1 673.1L318.1 687.7M360.2 696.1L345.5 712.2M389.8 717.2L361.9 754.5M422.6 736L411.3 754.9M458.4 752.1L449.1 772.1M496.6 765.1L481.5 809.7M536.7 774.6L532.1 796.3M578.2 780.5L576 802.7M662.5 780.8L665.5 803.2M703.9 775.2L709.4 797.2M743.8 765.9L760.5 810.7M781.8 753.2L792.1 773.7M817.2 737.3L829.6 756.7M849.7 718.6L879 756M878.8 697.5L894.5 714.1M904.3 674.5L921.3 689.5M926.1 649.9L962.9 677.3M944.1 624.2L962.7 635.9M958.3 597.8L977.3 607.7M968.9 571L1008 587.9M975.9 544.1L994.8 550.7M979.6 517.5L998.2 522.6M980.2 491.4L1017.3 498.8M977.8 465.9L995.2 468.2M972.7 441.3L989.3 442.3M613.8 417.6L998.9 417.6M613.8 417.6L609.7 189.4M613.8 417.6L230 417.6M613.8 417.6L621.1 825"/></g>
<polygon points="485,179.3 643,179.3 765,156 863,570 870.4,593.6 840,617.6 457,655 400,655 364.5,568.7 455.8,207.6 481,207.6" fill="#ffffff"/>
<polygon points="643,179.3 730,162.7 731,179.3" fill="url(#gt)"/>
<polygon points="455.8,207.6 480.9,207.6 470.8,278 438,278" fill="url(#gs)"/>
<polygon points="438,278 470.8,278 457.1,372.8 414,372.8" fill="url(#gs)"/>
<polygon points="414,372.8 457.1,372.8 438.6,501.5 381.4,501.5" fill="url(#gs2)"/>
<clipPath id="fc"><polygon points="364.5,568.7 863,570 840,617.6 457,655 400,655"/></clipPath>
<polygon points="364.5,568.7 863,570 840,617.6 457,655 400,655" fill="#f3f3f3"/>
<g clip-path="url(#fc)"><rect x="360" y="575" width="510" height="13.7" fill="url(#gf)"/><rect x="360" y="588.7" width="510" height="13" fill="url(#gf)"/><rect x="360" y="601.7" width="510" height="12.8" fill="url(#gf)"/><rect x="360" y="614.5" width="510" height="12.5" fill="url(#gf)"/><rect x="360" y="627" width="510" height="12" fill="url(#gf)"/><rect x="360" y="639" width="510" height="17" fill="url(#gf)"/></g>
<polygon points="364.5,568.7 863,570 860.6,575 367.1,575" fill="#ffffff"/>
<polygon points="863,570 870.4,593.6 840,617.6" fill="#858585"/>
<path d="M643 179.3L765 156L863 570L870.4 593.6L840 617.6L457 655L400 655L364.5 568.7L455.8 207.6L481 207.6M730 162.7L731 180M438 278L470.8 278M414 372.8L457.1 372.8M381.4 501.5L438.6 501.5M436.7 514.8L428 568.7M364.5 568.7L863 570M863 570L840 617.6M367.1 575L860.6 575M372.7 588.7L854 588.7M378.1 601.7L847.7 601.7M383.3 614.5L841.5 614.5M388.5 627L743.8 627M393.4 639L621 639" fill="none" stroke="#1a1a1a" stroke-width="0.9" stroke-linejoin="round"/>
<polygon points="436.7,514.8 789,515.2 789.2,516.6 436.2,519.6" fill="#b9b9b9" stroke="#1a1a1a" stroke-width="0.7"/>
<polygon points="485,179.3 728.2,179.3 789,515.2 436.7,514.8" fill="#ffffff" stroke="#1a1a1a" stroke-width="0.9" stroke-linejoin="round"/>
<path d="M728.6 181L789 515.2" stroke="#1a1a1a" stroke-width="1.4"/>
<ellipse cx="612" cy="330" rx="90" ry="135" fill="url(#lsh)"/>
<polygon points="556.6,223.3 658.4,223.3 675.2,431.4 547.2,431.4" fill="#1c1c1c" stroke="#141414" stroke-width="1.2"/>
<path d="M556.9 226L559.6 230.4L559.5 232.2L556.7 231.1ZM562.9 225.9L560.7 230.4L560.6 232.1L562.7 230.9ZM563.7 225.9L566.4 230L566.4 231.7L563.5 230.9ZM569.7 225.6L567.5 229.9L567.4 231.6L569.5 230.4ZM570.5 225.5L573.3 229.4L573.2 231L570.4 230.3ZM576.5 225.1L574.4 229.2L574.3 230.9L576.4 229.6ZM577.3 225.1L580.1 228.5L580.1 230L577.2 229.5ZM583.3 224.6L581.2 228.4L581.2 229.8L583.2 228.6ZM584.1 224.5L586.9 227.5L586.9 228.9L584.1 228.5ZM590.1 224L588 227.3L588 228.7L590.1 227.5ZM590.9 223.9L593.8 226.4L593.8 227.6L590.9 227.3ZM596.9 223.3L594.9 226.2L594.9 227.4L596.9 226.3ZM597.7 223.3L600.6 225.2L600.7 226.3L597.8 226.1ZM603.7 222.7L601.7 225.1L601.8 226.1L603.8 225.1ZM604.6 222.6L607.5 224.2L607.5 225.1L604.6 225ZM610.5 222.2L608.6 224L608.6 225L610.7 224.1ZM611.4 222.1L614.3 223.4L614.4 224.2L611.5 224ZM617.4 221.8L615.4 223.3L615.5 224.1L617.5 223.4ZM618.2 221.7L621.2 222.9L621.2 223.7L618.3 223.3ZM624.2 221.6L622.3 222.8L622.3 223.6L624.4 223.1ZM625 221.6L628 222.9L628.1 223.7L625.2 223.1ZM631 221.8L629.1 222.9L629.2 223.7L631.2 223.4ZM631.8 221.8L634.9 223.5L635 224.4L632 223.4ZM637.8 222.3L636 223.6L636.1 224.5L638.1 224.3ZM638.6 222.4L641.7 224.8L641.8 225.8L638.9 224.5ZM644.6 223.2L642.8 225L642.9 226.1L644.9 226ZM645.4 223.3L648.6 226.7L648.7 227.9L645.7 226.2ZM651.4 224.4L649.7 227L649.8 228.4L651.8 228.2ZM652.2 224.6L655.4 229.1L655.6 230.7L652.6 228.6ZM658.2 225.9L656.5 229.5L656.7 231.2L658.6 231ZM556.5 234.2L559.2 238.4L559.2 240.1L556.3 239.1ZM562.6 233.9L560.3 238.3L560.3 240L562.4 238.7ZM563.4 233.9L566.1 237.8L566.1 239.4L563.2 238.7ZM569.5 233.3L567.3 237.6L567.2 239.3L569.3 237.9ZM570.3 233.2L573.1 236.8L573 238.4L570.1 237.8ZM576.3 232.3L574.2 236.6L574.1 238.2L576.2 236.8ZM577.2 232.2L580 235.5L579.9 237L577.1 236.6ZM583.2 231.1L581.1 235.2L581.1 236.8L583.1 235.3ZM584 231L586.9 233.9L586.9 235.4L584 235.2ZM590.1 229.8L588 233.7L588 235.1L590.1 233.7ZM590.9 229.6L593.8 232.3L593.8 233.6L590.9 233.5ZM597 228.3L594.9 232L594.9 233.3L597 232ZM597.8 228.2L600.7 230.6L600.7 231.8L597.8 231.8ZM603.8 227L601.8 230.3L601.8 231.6L603.9 230.3ZM604.7 226.8L607.6 229L607.7 230.2L604.7 230.1ZM610.7 225.7L608.7 228.8L608.8 229.9L610.8 228.8ZM611.5 225.6L614.5 227.8L614.6 228.9L611.7 228.6ZM617.6 224.9L615.7 227.6L615.7 228.7L617.7 227.7ZM618.4 224.8L621.5 227L621.5 228.1L618.6 227.7ZM624.5 224.5L622.6 227L622.6 228L624.7 227.3ZM556.2 242L558.9 246.1L558.8 247.7L556 246.8ZM562.3 241.7L560 246L560 247.7L562.1 246.4ZM563.1 241.6L565.9 245.3L565.8 247L562.9 246.3ZM569.2 240.8L567 245.2L567 246.8L569.1 245.4ZM570.1 240.7L572.9 244.1L572.8 245.7L569.9 245.3ZM576.2 239.5L574 243.9L574 245.5L576.1 244ZM577 239.4L579.9 242.5L579.8 244.1L576.9 243.8ZM583.1 238L581 242.2L580.9 243.8L583.1 242.2ZM583.9 237.7L586.8 240.6L586.8 242.1L583.9 242ZM590.1 236.2L587.9 240.3L587.9 241.8L590 240.2ZM590.9 235.9L593.8 238.6L593.8 240L590.9 240ZM597 234.3L594.9 238.3L594.9 239.7L597 238.1ZM597.8 234L600.8 236.5L600.8 237.9L597.9 237.9ZM603.9 232.4L601.9 236.2L601.9 237.5L604 236.1ZM604.8 232.2L607.8 234.6L607.8 235.9L604.8 235.8ZM610.9 230.8L608.9 234.3L608.9 235.6L611 234.3ZM611.7 230.6L614.7 233.1L614.8 234.3L611.8 234.1ZM617.8 229.7L615.9 232.9L615.9 234.1L618 233ZM618.7 229.6L621.7 232.2L621.8 233.4L618.8 232.9ZM624.8 229.2L622.8 232.1L622.9 233.3L625 232.5ZM555.8 249.7L558.6 253.6L558.5 255.3L555.6 254.4ZM562 249.3L559.7 253.5L559.7 255.2L561.8 253.9ZM562.8 249.2L565.6 252.8L565.6 254.4L562.7 253.8ZM569 248.2L566.8 252.6L566.7 254.2L568.9 252.8ZM569.8 248.1L572.7 251.4L572.6 253L569.7 252.7ZM576 246.7L573.8 251.2L573.8 252.8L575.9 251.2ZM576.9 246.5L579.7 249.6L579.7 251.2L576.8 251ZM583 244.9L580.9 249.3L580.8 250.9L583 249.2ZM583.9 244.7L586.8 247.5L586.8 249L583.8 249ZM590 242.8L587.9 247.1L587.9 248.6L590 247ZM590.9 242.5L593.8 245.2L593.8 246.6L590.9 246.7ZM597 240.6L594.9 244.8L594.9 246.2L597.1 244.6ZM597.9 240.3L600.9 242.8L600.9 244.2L597.9 244.3ZM604 238.4L602 242.4L602 243.8L604.1 242.2ZM604.9 238.1L607.9 240.6L607.9 242L605 242ZM611.1 236.5L609 240.3L609.1 241.6L611.2 240.2ZM611.9 236.3L614.9 238.9L615 240.2L612 240ZM618.1 235.1L616.1 238.6L616.1 240L618.2 238.8ZM618.9 235L622 237.9L622 239.2L619 238.6ZM625.1 234.6L623.1 237.8L623.2 239.1L625.2 238.2ZM555.5 257.2L558.3 261.1L558.2 262.8L555.3 261.9ZM561.7 256.8L559.4 261L559.4 262.7L561.5 261.4ZM562.6 256.7L565.4 260.2L565.3 261.8L562.4 261.3ZM568.8 255.6L566.5 260L566.5 261.6L568.7 260.2ZM569.6 255.4L572.5 258.7L572.5 260.3L569.5 260ZM575.9 254L573.6 258.4L573.6 260L575.8 258.4ZM576.7 253.7L579.6 256.7L579.6 258.3L576.6 258.2ZM582.9 251.9L580.7 256.4L580.7 258L582.9 256.3ZM583.8 251.6L586.7 254.4L586.7 256L583.7 256ZM590 249.6L587.9 254L587.8 255.6L590 253.8ZM590.8 249.3L593.8 251.9L593.8 253.4L590.8 253.5ZM597.1 247.1L595 251.5L595 253L597.1 251.2ZM597.9 246.8L600.9 249.3L600.9 250.8L597.9 250.9ZM604.1 244.7L602.1 248.9L602.1 250.4L604.2 248.7ZM605 244.4L608 246.9L608.1 248.3L605.1 248.4ZM611.2 242.6L609.2 246.6L609.2 248L611.3 246.5ZM612.1 242.3L615.1 245L615.2 246.4L612.2 246.3ZM618.3 241.1L616.3 244.8L616.3 246.2L618.4 244.9ZM619.1 240.9L622.2 243.9L622.3 245.3L619.3 244.8ZM625.4 240.5L623.4 243.8L623.4 245.2L625.5 244.3ZM555.2 264.7L558 268.5L557.9 270.2L555 269.3ZM561.4 264.2L559.1 268.4L559.1 270.1L561.3 268.8ZM562.3 264.1L565.2 267.6L565.1 269.2L562.1 268.6ZM568.6 263L566.3 267.4L566.3 269L568.4 267.5ZM569.4 262.8L572.3 266L572.3 267.6L569.3 267.3ZM575.7 261.2L573.5 265.7L573.4 267.3L575.6 265.7ZM576.6 260.9L579.5 263.9L579.5 265.5L576.5 265.4ZM582.8 259L580.6 263.5L580.6 265.1L582.8 263.4ZM583.7 258.7L586.7 261.4L586.6 263L583.6 263.1ZM590 256.5L587.8 261L587.8 262.6L590 260.8ZM590.8 256.1L593.8 258.7L593.8 260.3L590.8 260.4ZM597.1 253.8L595 258.3L595 259.8L597.1 258ZM598 253.5L601 256L601 257.5L598 257.7ZM604.2 251.2L602.1 255.6L602.2 257.1L604.3 255.3ZM605.1 250.9L608.2 253.5L608.2 254.9L605.2 255ZM611.4 248.9L609.3 253.1L609.3 254.6L611.5 253ZM612.2 248.7L615.3 251.5L615.4 252.9L612.3 252.8ZM618.5 247.3L616.5 251.2L616.5 252.7L618.6 251.3ZM619.4 247.2L622.5 250.3L622.6 251.7L619.5 251.2ZM625.6 246.7L623.6 250.2L623.7 251.7L625.8 250.7ZM554.8 272.1L557.7 275.9L557.6 277.5L554.6 276.6ZM561.2 271.6L558.8 275.8L558.8 277.4L561 276.1ZM562 271.4L564.9 274.9L564.9 276.5L561.9 276ZM568.4 270.3L566.1 274.7L566 276.3L568.2 274.8ZM569.2 270.1L572.1 273.2L572.1 274.8L569.1 274.6ZM575.6 268.4L573.3 272.9L573.3 274.5L575.5 272.9ZM576.4 268.1L579.4 271.1L579.3 272.6L576.3 272.6ZM582.7 266.1L580.5 270.7L580.5 272.3L582.7 270.5ZM583.6 265.8L586.6 268.5L586.6 270.1L583.6 270.2ZM589.9 263.4L587.8 268.1L587.8 269.6L589.9 267.8ZM590.8 263.1L593.8 265.7L593.8 267.2L590.8 267.5ZM597.1 260.6L595 265.2L595 266.8L597.2 264.9ZM598 260.3L601.1 262.9L601.1 264.4L598 264.6ZM604.3 257.9L602.2 262.4L602.2 263.9L604.4 262.2ZM605.2 257.6L608.3 260.2L608.3 261.7L605.3 261.8ZM611.5 255.5L609.5 259.9L609.5 261.4L611.6 259.7ZM612.4 255.3L615.5 258.1L615.6 259.6L612.5 259.5ZM618.7 253.8L616.7 257.9L616.7 259.4L618.9 258ZM619.6 253.7L622.8 256.9L622.8 258.4L619.7 257.9ZM625.9 253.2L623.9 256.9L624 258.3L626.1 257.3ZM554.5 279.4L557.4 283.2L557.3 284.8L554.3 283.9ZM560.9 278.9L558.6 283.1L558.5 284.7L560.7 283.4ZM561.8 278.7L564.7 282.2L564.6 283.7L561.6 283.3ZM568.1 277.5L565.8 281.9L565.8 283.5L568 282ZM569 277.3L572 280.5L571.9 282.1L568.9 281.8ZM575.4 275.6L573.1 280.1L573.1 281.7L575.3 280.1ZM576.3 275.3L579.3 278.2L579.2 279.8L576.2 279.8ZM582.7 273.2L580.4 277.9L580.4 279.4L582.6 277.7ZM583.5 272.9L586.5 275.6L586.5 277.2L583.5 277.3ZM589.9 270.5L587.7 275.2L587.7 276.7L589.9 274.9ZM590.8 270.1L593.8 272.8L593.8 274.3L590.8 274.5ZM597.2 267.6L595 272.3L595 273.8L597.2 272ZM598 267.3L601.1 269.8L601.1 271.4L598.1 271.6ZM604.4 264.8L602.3 269.4L602.3 270.9L604.5 269.1ZM605.3 264.5L608.4 267.2L608.5 268.7L605.4 268.8ZM611.7 262.3L609.6 266.8L609.6 268.3L611.8 266.6ZM612.6 262.1L615.7 265L615.8 266.6L612.7 266.4ZM618.9 260.6L616.9 264.8L616.9 266.3L619.1 264.9ZM619.8 260.4L623 263.8L623.1 265.3L620 264.7ZM626.2 259.9L624.2 263.7L624.2 265.2L626.4 264.2ZM554.2 286.7L557.1 290.4L557 292L554 291.2ZM560.6 286.1L558.3 290.3L558.2 291.9L560.4 290.6ZM561.5 286L564.4 289.4L564.4 291L561.3 290.5ZM567.9 284.8L565.6 289.2L565.6 290.8L567.8 289.3ZM568.8 284.6L571.8 287.7L571.8 289.3L568.7 289.1ZM575.3 282.8L573 287.4L572.9 288.9L575.2 287.3ZM576.1 282.5L579.1 285.4L579.1 287L576 287ZM582.6 280.4L580.3 285L580.3 286.6L582.5 284.8ZM583.5 280.1L586.5 282.8L586.5 284.4L583.4 284.5ZM589.9 277.6L587.7 282.3L587.7 283.9L589.9 282.1ZM590.8 277.3L593.8 279.9L593.8 281.5L590.8 281.7ZM597.2 274.7L595 279.4L595 281L597.2 279.1ZM598.1 274.3L601.2 276.9L601.2 278.5L598.1 278.7ZM604.5 271.8L602.4 276.5L602.4 278.1L604.6 276.2ZM605.4 271.5L608.5 274.2L608.6 275.8L605.5 275.9ZM611.8 269.3L609.7 273.8L609.8 275.4L611.9 273.7ZM612.7 269.1L615.9 272.1L615.9 273.6L612.8 273.5ZM619.2 267.5L617.1 271.8L617.1 273.4L619.3 271.9ZM620 267.4L623.3 270.8L623.3 272.4L620.2 271.8ZM626.5 266.8L624.4 270.7L624.5 272.3L626.7 271.2ZM553.9 293.9L556.8 297.7L556.7 299.2L553.7 298.4ZM560.3 293.4L558 297.5L557.9 299.1L560.2 297.8ZM561.2 293.2L564.2 296.6L564.2 298.2L561.1 297.7ZM567.7 292L565.4 296.4L565.3 298L567.6 296.5ZM568.6 291.8L571.6 294.9L571.6 296.5L568.5 296.3ZM575.1 290L572.8 294.6L572.8 296.2L575 294.5ZM576 289.8L579 292.7L579 294.2L575.9 294.2ZM582.5 287.6L580.2 292.3L580.2 293.8L582.4 292.1ZM583.4 287.3L586.4 290L586.4 291.6L583.3 291.7ZM589.9 284.8L587.6 289.5L587.6 291.1L589.8 289.3ZM590.7 284.4L593.9 287.1L593.9 288.7L590.7 288.9ZM597.2 281.8L595 286.6L595 288.2L597.3 286.3ZM598.1 281.5L601.3 284.1L601.3 285.7L598.2 286ZM604.6 279L602.5 283.7L602.5 285.3L604.7 283.4ZM605.5 278.6L608.7 281.4L608.7 283L605.6 283.1ZM612 276.4L609.9 281L609.9 282.6L612.1 280.9ZM612.9 276.2L616.1 279.3L616.1 280.9L613 280.7ZM619.4 274.7L617.3 279L617.3 280.6L619.5 279.1ZM620.3 274.5L623.5 278L623.6 279.6L620.4 279ZM626.8 273.9L624.7 277.9L624.7 279.5L626.9 278.4ZM553.5 301.1L556.5 304.8L556.4 306.4L553.3 305.6ZM560.1 300.6L557.7 304.7L557.6 306.3L559.9 305ZM561 300.4L564 303.8L563.9 305.4L560.8 304.9ZM567.5 299.2L565.2 303.6L565.1 305.1L567.4 303.7ZM568.4 299L571.4 302.1L571.4 303.7L568.3 303.5ZM575 297.2L572.6 301.8L572.6 303.4L574.9 301.7ZM575.9 297L578.9 299.9L578.9 301.5L575.8 301.4ZM582.4 294.8L580.1 299.5L580.1 301.1L582.3 299.3ZM583.3 294.5L586.4 297.2L586.4 298.8L583.2 299ZM589.8 292L587.6 296.8L587.6 298.4L589.8 296.5ZM590.7 291.7L593.9 294.4L593.9 296L590.7 296.2ZM597.3 289.1L595.1 293.9L595.1 295.5L597.3 293.6ZM598.2 288.7L601.3 291.4L601.3 293.1L598.2 293.2ZM604.7 286.2L602.5 291L602.5 292.6L604.8 290.7ZM605.6 285.9L608.8 288.7L608.8 290.4L605.7 290.4ZM612.2 283.7L610 288.4L610 290L612.3 288.3ZM613.1 283.4L616.3 286.6L616.3 288.2L613.2 288ZM619.6 281.9L617.5 286.3L617.5 288L619.7 286.5ZM620.5 281.8L623.7 285.4L623.8 287L620.6 286.3ZM627 281.2L624.9 285.3L625 286.9L627.2 285.8ZM553.2 308.3L556.2 312L556.1 313.5L553 312.7ZM559.8 307.7L557.4 311.9L557.3 313.4L559.6 312.2ZM560.7 307.6L563.7 311L563.7 312.5L560.6 312ZM567.3 306.4L564.9 310.7L564.9 312.3L567.2 310.8ZM568.2 306.2L571.3 309.3L571.2 310.9L568.1 310.6ZM574.8 304.4L572.5 309L572.4 310.6L574.7 308.9ZM575.7 304.2L578.8 307.1L578.8 308.7L575.6 308.7ZM582.3 302L580 306.7L580 308.3L582.3 306.5ZM583.2 301.7L586.3 304.5L586.3 306.1L583.2 306.2ZM589.8 299.3L587.5 304.1L587.5 305.7L589.8 303.8ZM590.7 298.9L593.9 301.7L593.9 303.3L590.7 303.5ZM597.3 296.4L595.1 301.2L595.1 302.8L597.3 300.9ZM598.2 296L601.4 298.8L601.4 300.4L598.2 300.6ZM604.8 293.5L602.6 298.4L602.6 300L604.9 298.1ZM605.7 293.2L608.9 296.2L609 297.8L605.8 297.8ZM612.3 291.1L610.1 295.8L610.2 297.4L612.4 295.7ZM613.2 290.8L616.5 294L616.5 295.7L613.3 295.4ZM619.8 289.3L617.7 293.8L617.7 295.4L619.9 293.9ZM620.7 289.2L624 292.8L624 294.5L620.8 293.8ZM627.3 288.6L625.2 292.7L625.3 294.4L627.5 293.3ZM552.9 315.4L555.9 319.1L555.8 320.7L552.7 319.8ZM559.5 314.9L557.1 319L557.1 320.6L559.4 319.3ZM560.5 314.8L563.5 318.1L563.5 319.7L560.3 319.2ZM567.1 313.6L564.7 317.9L564.7 319.5L567 318ZM568 313.4L571.1 316.5L571.1 318.1L567.9 317.8ZM574.7 311.7L572.3 316.2L572.3 317.7L574.6 316.1ZM575.6 311.4L578.7 314.3L578.7 315.9L575.5 315.9ZM582.2 309.3L579.9 314L579.9 315.6L582.2 313.8ZM583.1 309L586.3 311.8L586.3 313.4L583.1 313.5ZM589.8 306.6L587.5 311.4L587.5 313L589.8 311.1ZM590.7 306.3L593.9 309L593.9 310.7L590.7 310.8ZM597.3 303.7L595.1 308.6L595.1 310.2L597.4 308.3ZM598.3 303.4L601.5 306.2L601.5 307.9L598.3 308ZM604.9 301L602.7 305.8L602.7 307.4L605 305.6ZM605.8 300.6L609.1 303.6L609.1 305.3L605.9 305.3ZM612.5 298.5L610.3 303.3L610.3 304.9L612.6 303.2ZM613.4 298.3L616.6 301.6L616.7 303.3L613.5 303ZM620 296.8L617.9 301.3L617.9 303L620.2 301.5ZM620.9 296.7L624.2 300.4L624.3 302.1L621.1 301.4ZM627.6 296.1L625.5 300.3L625.5 302L627.8 300.8ZM552.6 322.5L555.6 326.2L555.6 327.7L552.4 326.9ZM559.3 322L556.8 326.1L556.8 327.6L559.1 326.4ZM560.2 321.9L563.3 325.2L563.2 326.8L560 326.3ZM566.9 320.7L564.5 325L564.4 326.6L566.8 325.1ZM567.8 320.5L570.9 323.6L570.9 325.2L567.7 324.9ZM574.5 318.9L572.1 323.3L572.1 324.9L574.4 323.3ZM575.4 318.6L578.6 321.6L578.5 323.2L575.3 323.1ZM582.1 316.6L579.8 321.2L579.8 322.8L582.1 321.1ZM583.1 316.3L586.2 319.1L586.2 320.7L583 320.8ZM589.8 313.9L587.4 318.7L587.4 320.3L589.7 318.5ZM590.7 313.6L593.9 316.5L593.9 318.1L590.7 318.2ZM597.4 311.2L595.1 316L595.1 317.7L597.4 315.8ZM598.3 310.8L601.5 313.7L601.5 315.4L598.3 315.5ZM605 308.5L602.8 313.3L602.8 315L605.1 313.1ZM605.9 308.2L609.2 311.2L609.2 312.9L606 312.8ZM612.6 306.1L610.4 310.9L610.4 312.5L612.7 310.8ZM613.5 305.9L616.8 309.2L616.9 310.9L613.6 310.6ZM620.2 304.4L618.1 309L618.1 310.7L620.4 309.2ZM621.2 304.3L624.5 308.1L624.5 309.8L621.3 309.1ZM627.9 303.8L625.7 308L625.8 309.7L628 308.5ZM552.3 329.6L555.3 333.3L555.3 334.8L552.1 334ZM559 329.1L556.6 333.2L556.5 334.7L558.9 333.5ZM559.9 329L563 332.3L563 333.9L559.8 333.4ZM566.7 327.9L564.3 332.1L564.2 333.7L566.6 332.3ZM567.6 327.7L570.7 330.8L570.7 332.4L567.5 332.1ZM574.4 326.1L572 330.5L571.9 332.1L574.3 330.5ZM575.3 325.8L578.5 328.8L578.4 330.4L575.2 330.3ZM582.1 323.8L579.7 328.5L579.7 330.1L582 328.4ZM583 323.6L586.2 326.5L586.2 328.1L582.9 328.1ZM589.7 321.3L587.4 326.1L587.4 327.7L589.7 325.9ZM590.7 321L593.9 323.9L593.9 325.5L590.6 325.6ZM597.4 318.6L595.1 323.5L595.1 325.1L597.4 323.3ZM598.3 318.3L601.6 321.3L601.6 322.9L598.4 323ZM605.1 316L602.8 320.9L602.8 322.5L605.1 320.7ZM606 315.7L609.3 318.9L609.3 320.6L606.1 320.5ZM612.8 313.7L610.5 318.5L610.6 320.2L612.9 318.5ZM613.7 313.5L617 317L617.1 318.7L613.8 318.3ZM620.4 312.1L618.2 316.7L618.3 318.4L620.6 316.9ZM621.4 312L624.7 315.8L624.8 317.6L621.5 316.8ZM628.1 311.5L626 315.8L626 317.5L628.3 316.3ZM551.9 336.7L555 340.3L555 341.8L551.7 341ZM558.8 336.2L556.3 340.2L556.2 341.8L558.6 340.5ZM559.7 336.1L562.8 339.4L562.8 341L559.5 340.4ZM566.5 335L564.1 339.2L564 340.8L566.4 339.4ZM567.4 334.8L570.6 338L570.5 339.5L567.3 339.2ZM574.2 333.3L571.8 337.7L571.8 339.3L574.1 337.7ZM575.2 333L578.3 336.1L578.3 337.7L575.1 337.5ZM582 331.1L579.6 335.7L579.6 337.3L581.9 335.7ZM582.9 330.9L586.1 333.8L586.1 335.4L582.8 335.4ZM589.7 328.7L587.4 333.4L587.4 335.1L589.7 333.3ZM590.6 328.4L593.9 331.4L593.9 333L590.6 333ZM597.4 326.1L595.1 331L595.1 332.6L597.5 330.8ZM598.4 325.8L601.7 328.9L601.7 330.6L598.4 330.5ZM605.2 323.6L602.9 328.5L602.9 330.2L605.2 328.4ZM606.1 323.4L609.4 326.6L609.5 328.3L606.2 328.1ZM612.9 321.5L610.7 326.2L610.7 328L613 326.3ZM613.8 321.2L617.2 324.7L617.2 326.5L613.9 326.1ZM620.7 319.9L618.4 324.5L618.5 326.2L620.8 324.8ZM621.6 319.8L625 323.7L625 325.4L621.7 324.6ZM628.4 319.3L626.2 323.6L626.3 325.3L628.6 324.2ZM551.6 343.7L554.7 347.3L554.7 348.9L551.4 348ZM558.5 343.2L556 347.2L555.9 348.8L558.3 347.6ZM559.4 343.1L562.6 346.5L562.5 348L559.3 347.5ZM566.3 342.1L563.8 346.3L563.8 347.9L566.2 346.5ZM567.2 341.9L570.4 345.1L570.4 346.7L567.1 346.3ZM574.1 340.5L571.7 344.9L571.6 346.4L574 344.9ZM575 340.2L578.2 343.3L578.2 344.9L574.9 344.7ZM581.9 338.4L579.5 343L579.5 344.6L581.8 343ZM582.8 338.2L586.1 341.2L586.1 342.8L582.8 342.7ZM589.7 336.1L587.3 340.8L587.3 342.5L589.7 340.7ZM590.6 335.8L593.9 338.9L593.9 340.5L590.6 340.5ZM597.5 333.7L595.1 338.5L595.1 340.2L597.5 338.4ZM598.4 333.4L601.7 336.5L601.7 338.2L598.4 338.1ZM605.3 331.3L603 336.1L603 337.8L605.3 336.1ZM606.2 331L609.6 334.3L609.6 336.1L606.3 335.8ZM613.1 329.2L610.8 334L610.8 335.7L613.2 334.1ZM614 329L617.4 332.6L617.4 334.3L614.1 333.9ZM620.9 327.8L618.6 332.4L618.7 334.1L621 332.7ZM621.8 327.6L625.2 331.6L625.3 333.4L621.9 332.5ZM628.7 327.2L626.5 331.5L626.5 333.3L628.8 332.1ZM551.3 350.7L554.5 354.3L554.4 355.9L551.1 355ZM558.2 350.3L555.7 354.2L555.7 355.8L558.1 354.6ZM559.2 350.2L562.3 353.5L562.3 355.1L559 354.5ZM566.1 349.2L563.6 353.4L563.6 354.9L566 353.6ZM567 349L570.2 352.3L570.2 353.8L566.9 353.4ZM573.9 347.6L571.5 352L571.5 353.6L573.9 352.1ZM574.9 347.4L578.1 350.6L578.1 352.2L574.8 351.9ZM581.8 345.7L579.4 350.3L579.4 351.9L581.7 350.3ZM582.7 345.5L586 348.6L586 350.2L582.7 350ZM589.7 343.6L587.3 348.2L587.3 349.9L589.6 348.2ZM590.6 343.3L593.9 346.4L593.9 348.1L590.6 347.9ZM597.5 341.3L595.2 346L595.2 347.7L597.5 346ZM598.5 341L601.8 344.2L601.8 345.9L598.5 345.7ZM605.4 339L603 343.8L603.1 345.5L605.4 343.8ZM606.3 338.8L609.7 342.1L609.7 343.9L606.4 343.6ZM613.2 337.1L610.9 341.8L611 343.6L613.3 342ZM614.2 336.9L617.6 340.5L617.6 342.3L614.3 341.8ZM621.1 335.7L618.8 340.3L618.9 342.1L621.2 340.6ZM622 335.6L625.4 339.6L625.5 341.3L622.2 340.5ZM628.9 335.1L626.7 339.5L626.8 341.3L629.1 340.1ZM551 357.7L554.2 361.3L554.1 362.8L550.8 362ZM558 357.3L555.4 361.2L555.4 362.8L557.8 361.6ZM558.9 357.2L562.1 360.6L562.1 362.1L558.8 361.5ZM565.9 356.3L563.4 360.4L563.3 362L565.8 360.7ZM566.8 356.1L570.1 359.4L570 361L566.7 360.5ZM573.8 354.8L571.3 359.2L571.3 360.7L573.7 359.3ZM574.7 354.6L578 357.8L578 359.4L574.7 359.1ZM581.7 353.1L579.3 357.5L579.3 359.1L581.7 357.6ZM582.7 352.8L586 356L585.9 357.6L582.6 357.4ZM589.6 351L587.2 355.7L587.2 357.3L589.6 355.7ZM590.6 350.8L593.9 353.9L593.9 355.6L590.6 355.4ZM597.5 348.9L595.2 353.6L595.2 355.3L597.6 353.6ZM598.5 348.6L601.9 351.9L601.9 353.6L598.5 353.4ZM605.5 346.8L603.1 351.6L603.1 353.3L605.5 351.6ZM606.4 346.5L609.8 350L609.8 351.7L606.5 351.4ZM613.4 345L611.1 349.7L611.1 351.5L613.5 349.9ZM614.3 344.8L617.7 348.5L617.8 350.2L614.4 349.7ZM621.3 343.7L619 348.3L619.1 350.1L621.4 348.6ZM622.2 343.5L625.7 347.6L625.7 349.4L622.4 348.5ZM629.2 343.1L627 347.5L627 349.3L629.4 348.1ZM550.7 364.6L553.9 368.3L553.8 369.8L550.5 368.9ZM557.7 364.3L555.2 368.2L555.1 369.7L557.5 368.6ZM558.7 364.2L561.9 367.6L561.8 369.2L558.5 368.5ZM565.7 363.3L563.2 367.5L563.1 369L565.6 367.7ZM566.6 363.2L569.9 366.5L569.9 368.1L566.5 367.6ZM573.7 362L571.2 366.3L571.1 367.9L573.6 366.5ZM574.6 361.8L577.9 365.1L577.9 366.7L574.5 366.3ZM581.6 360.4L579.2 364.8L579.2 366.4L581.6 364.9ZM582.6 360.2L585.9 363.4L585.9 365L582.5 364.7ZM589.6 358.5L587.2 363.1L587.2 364.7L589.6 363.1ZM590.6 358.3L593.9 361.5L593.9 363.2L590.5 362.9ZM597.6 356.5L595.2 361.2L595.2 362.9L597.6 361.2ZM598.5 356.3L601.9 359.6L601.9 361.3L598.6 361ZM605.5 354.6L603.2 359.3L603.2 361L605.6 359.4ZM606.5 354.3L609.9 357.9L609.9 359.6L606.6 359.2ZM613.5 352.9L611.2 357.6L611.2 359.4L613.6 357.8ZM614.5 352.7L617.9 356.5L618 358.3L614.6 357.6ZM621.5 351.7L619.2 356.3L619.2 358.1L621.6 356.7ZM622.5 351.6L625.9 355.7L626 357.5L622.6 356.6ZM629.5 351.2L627.2 355.6L627.3 357.4L629.6 356.2ZM550.4 371.6L553.6 375.2L553.5 376.8L550.2 375.9ZM557.5 371.2L554.9 375.2L554.8 376.7L557.3 375.6ZM558.4 371.2L561.7 374.6L561.6 376.2L558.3 375.5ZM565.5 370.4L563 374.5L562.9 376L565.4 374.8ZM566.4 370.3L569.7 373.6L569.7 375.2L566.3 374.7ZM573.5 369.2L571 373.4L571 375L573.4 373.6ZM574.5 369L577.8 372.3L577.8 373.9L574.4 373.5ZM581.5 367.7L579.1 372.1L579.1 373.7L581.5 372.2ZM582.5 367.5L585.9 370.8L585.8 372.4L582.5 372ZM589.6 366L587.1 370.5L587.1 372.1L589.6 370.6ZM590.5 365.8L593.9 369.1L593.9 370.8L590.5 370.4ZM597.6 364.2L595.2 368.8L595.2 370.5L597.6 368.9ZM598.6 363.9L602 367.4L602 369.1L598.6 368.7ZM605.6 362.4L603.3 367.1L603.3 368.8L605.7 367.2ZM606.6 362.2L610 365.8L610.1 367.5L606.7 367.1ZM613.7 360.8L611.3 365.6L611.4 367.3L613.8 365.8ZM614.6 360.7L618.1 364.5L618.1 366.3L614.7 365.6ZM621.7 359.7L619.4 364.4L619.4 366.1L621.8 364.8ZM622.7 359.7L626.2 363.8L626.2 365.6L622.8 364.7ZM629.7 359.3L627.5 363.7L627.5 365.5L629.9 364.4ZM550.1 378.5L553.3 382.2L553.3 383.7L549.9 382.8ZM557.2 378.2L554.6 382.1L554.6 383.6L557 382.5ZM558.2 378.1L561.4 381.6L561.4 383.2L558 382.5ZM565.3 377.4L562.7 381.5L562.7 383L565.2 381.8ZM566.3 377.3L569.6 380.7L569.5 382.3L566.1 381.7ZM573.4 376.4L570.9 380.6L570.8 382.1L573.3 380.8ZM574.3 376.2L577.7 379.6L577.7 381.2L574.3 380.7ZM581.5 375L579 379.4L579 381L581.4 379.5ZM582.4 374.8L585.8 378.2L585.8 379.8L582.4 379.4ZM589.6 373.5L587.1 377.9L587.1 379.6L589.5 378.1ZM590.5 373.3L593.9 376.7L593.9 378.3L590.5 377.9ZM597.6 371.8L595.2 376.4L595.2 378.1L597.7 376.6ZM598.6 371.6L602 375.1L602.1 376.9L598.6 376.4ZM605.7 370.2L603.3 374.9L603.4 376.6L605.8 375.1ZM606.7 370L610.2 373.7L610.2 375.5L606.8 374.9ZM613.8 368.8L611.5 373.5L611.5 375.3L613.9 373.8ZM614.8 368.7L618.3 372.6L618.3 374.4L614.9 373.7ZM621.9 367.8L619.6 372.5L619.6 374.2L622 372.9ZM622.9 367.8L626.4 371.9L626.5 373.7L623 372.8ZM630 367.4L627.7 371.9L627.8 373.7L630.2 372.5ZM631 367.5L634.5 372L634.6 373.8L631.1 372.5ZM638.1 367.8L635.8 372L635.9 373.8L638.3 372.9ZM639.1 367.9L642.6 372.8L642.7 374.6L639.3 373ZM646.2 369.1L643.9 373L644 374.8L646.4 374.1ZM647.1 369.4L650.8 374.5L650.9 376.2L647.4 374.3ZM654.3 371.4L652.1 374.8L652.2 376.6L654.5 376.2ZM655.2 371.7L658.9 377.1L659 378.7L655.5 376.5ZM662.4 374.5L660.2 377.6L660.3 379.2L662.7 379.1ZM663.3 375L667 380.4L667.1 381.9L663.6 379.5ZM670.4 378.3L668.3 380.9L668.4 382.5L670.8 382.6ZM549.8 385.4L553 389.1L553 390.6L549.6 389.7ZM556.9 385.2L554.3 389L554.3 390.6L556.8 389.5ZM557.9 385.1L561.2 388.6L561.2 390.1L557.8 389.4ZM565.1 384.5L562.5 388.5L562.5 390L565 388.8ZM566.1 384.4L569.4 387.8L569.4 389.4L565.9 388.8ZM573.2 383.5L570.7 387.7L570.7 389.2L573.1 388ZM574.2 383.4L577.6 386.8L577.5 388.4L574.1 387.8ZM581.4 382.3L578.9 386.6L578.9 388.2L581.3 386.9ZM582.4 382.2L585.7 385.6L585.7 387.2L582.3 386.7ZM589.5 380.9L587.1 385.4L587 387L589.5 385.6ZM590.5 380.8L593.9 384.3L593.9 385.9L590.5 385.4ZM597.7 379.5L595.2 384.1L595.2 385.7L597.7 384.3ZM598.7 379.3L602.1 382.9L602.1 384.6L598.7 384.1ZM605.8 378.1L603.4 382.7L603.4 384.4L605.9 383ZM606.8 377.9L610.3 381.7L610.3 383.4L606.9 382.8ZM614 376.9L611.6 381.5L611.6 383.3L614.1 381.8ZM614.9 376.7L618.5 380.7L618.5 382.5L615 381.7ZM622.1 376L619.8 380.6L619.8 382.4L622.2 381ZM623.1 375.9L626.6 380.1L626.7 381.9L623.2 381ZM630.3 375.6L628 380.1L628 381.9L630.4 380.7ZM631.2 375.6L634.8 380.1L634.9 381.9L631.4 380.7ZM638.4 376L636.1 380.2L636.2 382L638.6 381ZM639.4 376.1L643 380.9L643.1 382.6L639.6 381.1ZM646.6 377.1L644.3 381L644.4 382.8L646.8 382.1ZM647.5 377.3L651.2 382.4L651.3 384.1L647.8 382.3ZM654.7 379.1L652.5 382.7L652.6 384.4L655 383.9ZM655.7 379.4L659.4 384.6L659.5 386.3L656 384.2ZM662.9 381.9L660.7 385L660.8 386.7L663.2 386.5ZM663.8 382.3L667.5 387.5L667.7 389.1L664.1 386.8ZM671 385.2L668.8 388L669 389.6L671.3 389.5ZM549.5 392.3L552.8 396L552.7 397.5L549.3 396.6ZM556.7 392.1L554.1 395.9L554 397.5L556.5 396.4ZM557.7 392L561 395.6L560.9 397.1L557.5 396.3ZM564.9 391.5L562.3 395.5L562.3 397L564.8 395.9ZM565.9 391.4L569.2 394.9L569.2 396.5L565.7 395.8ZM573.1 390.7L570.5 394.8L570.5 396.3L573 395.1ZM574.1 390.6L577.5 394L577.4 395.6L574 395ZM581.3 389.6L578.8 393.9L578.8 395.5L581.2 394.2ZM582.3 389.5L585.7 393L585.7 394.6L582.2 394ZM589.5 388.4L587 392.8L587 394.5L589.5 393.1ZM590.5 388.3L593.9 391.9L593.9 393.5L590.5 393ZM597.7 387.2L595.3 391.7L595.3 393.4L597.7 392ZM598.7 387L602.2 390.7L602.2 392.4L598.7 391.8ZM605.9 386L603.5 390.5L603.5 392.3L606 390.9ZM606.9 385.8L610.4 389.7L610.4 391.4L607 390.7ZM614.1 384.9L611.7 389.5L611.8 391.3L614.2 389.9ZM615.1 384.8L618.6 388.8L618.7 390.6L615.2 389.8ZM622.3 384.1L620 388.7L620 390.5L622.4 389.2ZM623.3 384.1L626.9 388.3L626.9 390.1L623.4 389.1ZM630.5 383.8L628.2 388.3L628.3 390.1L630.7 388.9ZM631.5 383.8L635.1 388.3L635.2 390.2L631.7 388.9ZM638.7 384.1L636.4 388.4L636.5 390.2L638.9 389.2ZM639.7 384.2L643.4 389L643.4 390.7L639.9 389.3ZM646.9 385.1L644.7 389.1L644.8 390.9L647.2 390.1ZM647.9 385.3L651.6 390.2L651.7 392L648.2 390.3ZM655.1 386.9L652.9 390.5L653 392.2L655.4 391.7ZM656.1 387.1L659.8 392.2L659.9 393.8L656.4 391.9ZM663.3 389.3L661.1 392.5L661.2 394.2L663.7 393.8ZM664.3 389.6L668.1 394.6L668.2 396.2L664.6 394.1ZM671.6 392.2L669.4 395.1L669.5 396.6L671.9 396.4ZM549.1 399.2L552.5 402.9L552.4 404.4L549 403.5ZM556.4 399L553.8 402.8L553.7 404.4L556.3 403.3ZM557.4 399L560.8 402.5L560.7 404.1L557.3 403.3ZM564.7 398.5L562.1 402.5L562 404L564.6 402.9ZM565.7 398.5L569.1 402L569 403.5L565.6 402.8ZM572.9 397.8L570.4 401.9L570.3 403.4L572.9 402.3ZM573.9 397.7L577.4 401.3L577.3 402.9L573.9 402.2ZM581.2 396.9L578.7 401.1L578.7 402.7L581.2 401.5ZM582.2 396.8L585.6 400.4L585.6 402.1L582.2 401.4ZM589.5 395.9L587 400.3L587 401.9L589.5 400.6ZM590.5 395.8L593.9 399.5L593.9 401.2L590.5 400.5ZM597.7 394.9L595.3 399.3L595.3 401L597.8 399.7ZM598.7 394.8L602.2 398.5L602.2 400.3L598.8 399.6ZM606 393.9L603.6 398.4L603.6 400.1L606.1 398.8ZM607 393.7L610.5 397.7L610.6 399.4L607.1 398.7ZM614.3 393L611.9 397.5L611.9 399.3L614.4 398ZM615.3 392.9L618.8 397L618.9 398.8L615.4 397.9ZM622.5 392.3L620.1 396.9L620.2 398.7L622.7 397.4ZM623.5 392.3L627.1 396.6L627.2 398.4L623.7 397.4ZM630.8 392.1L628.4 396.5L628.5 398.4L631 397.2ZM631.8 392.1L635.4 396.6L635.5 398.4L631.9 397.2ZM639.1 392.3L636.7 396.6L636.8 398.4L639.3 397.4ZM640 392.4L643.7 397.1L643.8 398.9L640.2 397.5ZM647.3 393.2L645 397.2L645.1 399L647.6 398.1ZM648.3 393.3L652 398.1L652.1 399.9L648.5 398.3ZM655.6 394.6L653.3 398.4L653.4 400.1L655.9 399.4ZM656.6 394.8L660.3 399.7L660.4 401.4L656.8 399.6ZM663.8 396.6L661.6 400L661.7 401.7L664.1 401.2ZM664.8 396.9L668.6 401.8L668.7 403.3L665.1 401.5ZM672.1 399.1L669.9 402.1L670 403.7L672.4 403.3ZM548.8 406.1L552.2 409.8L552.1 411.3L548.7 410.3ZM556.2 405.9L553.5 409.7L553.5 411.2L556 410.2ZM557.2 405.9L560.5 409.5L560.5 411L557 410.2ZM564.5 405.5L561.9 409.4L561.8 411L564.4 409.9ZM565.5 405.5L568.9 409.1L568.9 410.6L565.4 409.8ZM572.8 405L570.2 409L570.2 410.5L572.7 409.4ZM573.8 404.9L577.2 408.5L577.2 410.1L573.7 409.3ZM581.1 404.3L578.6 408.4L578.6 410L581.1 408.8ZM582.1 404.2L585.6 407.8L585.6 409.5L582.1 408.7ZM589.4 403.5L586.9 407.7L586.9 409.4L589.4 408.1ZM590.4 403.4L593.9 407.1L593.9 408.8L590.4 408ZM597.8 402.6L595.3 407L595.3 408.7L597.8 407.4ZM598.8 402.5L602.3 406.4L602.3 408.1L598.8 407.3ZM606.1 401.8L603.6 406.3L603.6 408L606.1 406.7ZM607.1 401.7L610.6 405.7L610.7 407.5L607.1 406.6ZM614.4 401L612 405.6L612 407.4L614.5 406.1ZM615.4 401L619 405.2L619 407L615.5 406ZM622.7 400.5L620.3 405.1L620.4 406.9L622.9 405.6ZM623.7 400.5L627.4 404.8L627.4 406.7L623.9 405.6ZM631.1 400.3L628.7 404.8L628.7 406.6L631.2 405.5ZM632.1 400.3L635.7 404.8L635.8 406.7L632.2 405.5ZM639.4 400.5L637 404.9L637.1 406.7L639.6 405.6ZM640.4 400.6L644.1 405.2L644.1 407L640.6 405.7ZM647.7 401.2L645.4 405.3L645.5 407.1L647.9 406.2ZM648.7 401.3L652.4 406.1L652.5 407.8L648.9 406.3ZM656 402.4L653.7 406.2L653.8 408L656.3 407.2ZM657 402.6L660.8 407.3L660.9 409L657.3 407.4ZM664.3 404L662.1 407.5L662.2 409.2L664.6 408.6ZM665.3 404.2L669.1 408.9L669.2 410.5L665.6 408.8ZM672.7 406L670.4 409.2L670.6 410.7L673 410.2ZM548.5 412.9L551.9 416.6L551.8 418.1L548.3 417.2ZM555.9 412.8L553.2 416.6L553.2 418.1L555.8 417.1ZM556.9 412.8L560.3 416.4L560.3 418L556.8 417.1ZM564.3 412.5L561.7 416.4L561.6 417.9L564.2 416.9ZM565.3 412.5L568.7 416.1L568.7 417.7L565.2 416.8ZM572.7 412.1L570.1 416.1L570 417.6L572.6 416.5ZM573.7 412L577.1 415.7L577.1 417.3L573.6 416.5ZM581 411.6L578.5 415.7L578.5 417.3L581 416.1ZM582.1 411.5L585.5 415.3L585.5 416.9L582 416.1ZM589.4 411L586.9 415.2L586.9 416.8L589.4 415.6ZM590.4 410.9L594 414.7L594 416.4L590.4 415.6ZM597.8 410.3L595.3 414.7L595.3 416.3L597.8 415.1ZM598.8 410.2L602.4 414.2L602.4 416L598.8 415.1ZM606.2 409.7L603.7 414.1L603.7 415.9L606.2 414.6ZM607.2 409.6L610.8 413.7L610.8 415.5L607.2 414.6ZM614.6 409.2L612.1 413.7L612.1 415.5L614.6 414.2ZM615.6 409.1L619.2 413.4L619.2 415.2L615.7 414.2ZM622.9 408.8L620.5 413.3L620.6 415.1L623.1 413.9ZM623.9 408.7L627.6 413.1L627.6 415L624.1 413.9ZM631.3 408.6L628.9 413.1L629 415L631.5 413.8ZM632.3 408.6L636 413.1L636.1 415L632.5 413.8ZM639.7 408.8L637.3 413.2L637.4 415L639.9 413.9ZM640.7 408.8L644.4 413.4L644.5 415.2L640.9 413.9ZM648.1 409.3L645.8 413.5L645.8 415.3L648.3 414.3ZM649.1 409.4L652.8 414L652.9 415.8L649.3 414.4ZM656.5 410.2L654.2 414.1L654.3 415.9L656.7 415ZM657.5 410.3L661.2 414.9L661.3 416.6L657.7 415.1ZM664.8 411.4L662.6 415L662.7 416.7L665.1 416ZM665.8 411.6L669.6 416L669.8 417.6L666.1 416.1ZM673.2 412.9L671 416.2L671.1 417.7L673.5 417.1ZM548.2 419.8L551.6 423.5L551.6 425L548 424ZM555.7 419.7L553 423.5L552.9 425L555.5 424ZM556.7 419.7L560.1 423.4L560 424.9L556.5 424ZM564.1 419.5L561.4 423.3L561.4 424.9L564 423.8ZM565.1 419.5L568.6 423.2L568.5 424.7L565 423.8ZM572.5 419.2L569.9 423.2L569.9 424.7L572.4 423.7ZM573.5 419.2L577 423L577 424.6L573.5 423.6ZM581 418.9L578.4 422.9L578.4 424.5L580.9 423.4ZM582 418.8L585.5 422.7L585.5 424.3L581.9 423.4ZM589.4 418.5L586.8 422.6L586.8 424.3L589.4 423.2ZM590.4 418.4L594 422.4L594 424.1L590.4 423.1ZM597.8 418.1L595.3 422.4L595.3 424.1L597.9 422.9ZM598.8 418L602.4 422.1L602.4 423.8L598.9 422.9ZM606.3 417.7L603.8 422.1L603.8 423.8L606.3 422.6ZM607.3 417.6L610.9 421.8L610.9 423.6L607.3 422.6ZM614.7 417.3L612.2 421.8L612.3 423.6L614.8 422.4ZM615.7 417.3L619.4 421.6L619.4 423.4L615.8 422.4ZM623.1 417L620.7 421.6L620.8 423.4L623.3 422.2ZM624.2 417L627.8 421.5L627.9 423.3L624.3 422.2ZM631.6 416.9L629.2 421.5L629.2 423.3L631.7 422.1ZM632.6 416.9L636.3 421.5L636.4 423.3L632.8 422.1ZM640 417L637.6 421.5L637.7 423.3L640.2 422.2ZM641 417.1L644.8 421.6L644.8 423.5L641.2 422.2ZM648.4 417.4L646.1 421.7L646.2 423.5L648.7 422.4ZM649.5 417.4L653.2 422L653.3 423.7L649.7 422.5ZM656.9 418L654.6 422L654.7 423.8L657.2 422.8ZM657.9 418L661.7 422.5L661.8 424.2L658.2 422.9ZM665.3 418.8L663 422.6L663.2 424.2L665.6 423.4ZM666.3 418.9L670.2 423.1L670.3 424.7L666.6 423.4ZM673.8 419.7L671.5 423.2L671.6 424.8L674.1 424ZM547.9 426.6L551.3 430.3L551.3 431.4L547.7 430.9ZM555.4 426.6L552.7 430.3L552.7 431.4L555.2 430.8ZM556.4 426.6L559.9 430.3L559.8 431.4L556.3 430.8ZM563.9 426.5L561.2 430.3L561.2 431.4L563.8 430.8ZM564.9 426.5L568.4 430.3L568.4 431.4L564.8 430.8ZM572.4 426.4L569.8 430.3L569.7 431.4L572.3 430.8ZM573.4 426.4L576.9 430.2L576.9 431.4L573.3 430.8ZM580.9 426.2L578.3 430.2L578.3 431.4L580.8 430.8ZM581.9 426.2L585.4 430.2L585.4 431.4L581.9 430.8ZM589.4 426L586.8 430.2L586.8 431.4L589.4 430.8ZM590.4 426L594 430.1L594 431.4L590.4 430.8ZM597.9 425.9L595.3 430.1L595.3 431.4L597.9 430.7ZM598.9 425.8L602.5 430.1L602.5 431.4L598.9 430.7ZM606.4 425.7L603.8 430.1L603.9 431.4L606.4 430.7ZM607.4 425.6L611 430L611 431.4L607.4 430.7ZM614.9 425.5L612.4 430L612.4 431.4L614.9 430.7ZM615.9 425.5L619.5 430L619.6 431.4L616 430.7ZM623.3 425.4L620.9 430L620.9 431.4L623.5 430.7ZM624.4 425.4L628.1 430L628.1 431.4L624.5 430.7ZM631.8 425.3L629.4 430L629.5 431.4L632 430.7ZM632.9 425.3L636.6 430L636.6 431.4L633 430.7ZM640.3 425.4L637.9 430L638 431.4L640.5 430.7ZM641.4 425.4L645.1 430L645.2 431.4L641.6 430.7ZM648.8 425.5L646.5 430L646.5 431.4L649.1 430.7ZM649.8 425.6L653.6 430.1L653.7 431.4L650.1 430.7ZM657.3 425.8L655 430.1L655.1 431.4L657.6 430.7ZM658.3 425.8L662.2 430.1L662.2 431.4L658.6 430.7ZM665.8 426.2L663.5 430.2L663.6 431.4L666.1 430.8ZM666.8 426.2L670.7 430.2L670.8 431.4L667.1 430.8ZM674.3 426.6L672 430.3L672.1 431.4L674.6 430.9Z" fill="#8c8c8c"/>
<path d="M625.3 224.5L628.4 227L628.4 228.1L625.5 227.3ZM631.4 224.9L629.5 227.1L629.6 228.2L631.6 227.7ZM632.2 225L635.3 228L635.4 229.1L632.4 227.8ZM638.2 226L636.4 228.2L636.5 229.3L638.5 229.1ZM639.1 226.2L642.2 229.9L642.3 231.1L639.3 229.4ZM645.1 228L643.3 230.2L643.4 231.5L645.4 231.5ZM645.9 228.3L649.1 232.7L649.2 234.1L646.3 231.9ZM652 230.7L650.2 233.3L650.3 234.7L652.3 234.8ZM652.8 231.1L656 236.4L656.2 238L653.2 235.3ZM658.9 234L657.1 237L657.3 238.6L659.3 238.8ZM625.6 229.2L628.7 232.2L628.8 233.4L625.8 232.5ZM631.7 229.7L629.8 232.3L629.9 233.5L631.9 233ZM632.6 229.8L635.7 233.3L635.8 234.5L632.8 233.1ZM638.7 231.2L636.8 233.6L636.9 234.8L638.9 234.7ZM639.5 231.4L642.7 235.6L642.8 237L639.8 235ZM645.6 233.8L643.8 236.1L643.9 237.5L645.9 237.6ZM646.4 234.2L649.6 239.1L649.8 240.6L646.7 238ZM652.6 237.4L650.8 239.8L650.9 241.3L652.9 241.7ZM653.4 237.9L656.6 243.6L656.7 245.2L653.7 242.2ZM659.5 241.8L657.7 244.4L657.9 246L659.9 246.5ZM625.9 234.6L629 237.9L629.1 239.2L626.1 238.2ZM632.1 235.1L630.2 238L630.2 239.3L632.3 238.8ZM632.9 235.3L636.1 239.1L636.2 240.5L633.1 238.9ZM639.1 236.9L637.2 239.5L637.3 240.8L639.3 240.7ZM639.9 237.2L643.1 241.8L643.2 243.2L640.2 241ZM646.1 240L644.2 242.3L644.3 243.7L646.4 244ZM646.9 240.5L650.2 245.8L650.3 247.3L647.2 244.5ZM653.1 244.3L651.3 246.5L651.4 248L653.4 248.6ZM653.9 244.8L657.2 250.9L657.3 252.5L654.3 249.2ZM660.1 249.4L658.3 251.7L658.5 253.4L660.5 254ZM626.2 240.5L629.3 243.9L629.4 245.3L626.4 244.3ZM632.4 241.1L630.5 244.1L630.6 245.4L632.6 244.9ZM633.3 241.2L636.5 245.3L636.5 246.7L633.5 245.1ZM639.5 243L637.6 245.7L637.7 247.1L639.8 247ZM640.4 243.4L643.6 248.2L643.7 249.7L640.6 247.3ZM646.6 246.5L644.7 248.8L644.8 250.3L646.9 250.6ZM647.4 247L650.7 252.6L650.8 254.1L647.7 251.1ZM653.6 251.2L651.8 253.4L651.9 254.9L654 255.5ZM654.5 251.9L657.8 258.1L657.9 259.7L654.8 256.2ZM660.7 256.9L658.9 259.1L659 260.7L661.1 261.5ZM626.5 246.7L629.7 250.3L629.7 251.8L626.7 250.7ZM632.8 247.3L630.8 250.5L630.9 251.9L633 251.3ZM633.6 247.5L636.8 251.8L636.9 253.2L633.9 251.5ZM639.9 249.4L638 252.2L638.1 253.6L640.2 253.5ZM640.8 249.8L644 254.8L644.1 256.3L641 253.9ZM647 253.1L645.1 255.5L645.2 257L647.3 257.3ZM647.9 253.7L651.2 259.5L651.3 261L648.2 257.9ZM654.2 258.2L652.3 260.3L652.4 261.9L654.5 262.6ZM655 258.9L658.3 265.3L658.5 266.9L655.4 263.3ZM661.3 264.3L659.5 266.4L659.6 268L661.7 268.9ZM626.8 253.2L630 257L630.1 258.4L627 257.3ZM633.1 253.8L631.1 257.1L631.2 258.6L633.3 258ZM634 254L637.2 258.5L637.3 260L634.2 258.2ZM640.3 256.1L638.4 258.9L638.5 260.4L640.6 260.3ZM641.2 256.4L644.4 261.7L644.5 263.2L641.4 260.7ZM647.5 259.9L645.6 262.3L645.7 263.8L647.8 264.2ZM648.4 260.5L651.7 266.4L651.8 268L648.7 264.8ZM654.7 265.3L652.8 267.3L652.9 268.9L655 269.7ZM655.6 266L658.9 272.6L659 274.1L655.9 270.4ZM661.9 271.7L660.1 273.6L660.2 275.2L662.3 276.2ZM627.1 259.9L630.3 263.8L630.4 265.3L627.3 264.2ZM633.5 260.6L631.5 263.9L631.5 265.5L633.7 264.9ZM634.3 260.8L637.6 265.4L637.7 266.9L634.6 265.1ZM640.7 262.9L638.8 265.8L638.8 267.3L641 267.2ZM641.6 263.3L644.9 268.6L645 270.2L641.8 267.6ZM648 266.9L646 269.3L646.1 270.8L648.3 271.2ZM648.9 267.5L652.2 273.5L652.3 275.1L649.1 271.8ZM655.2 272.4L653.3 274.4L653.4 276L655.6 276.8ZM656.1 273.1L659.5 279.8L659.6 281.4L656.4 277.6ZM662.5 279L660.6 280.9L660.7 282.5L662.9 283.5ZM627.4 266.8L630.6 270.8L630.7 272.4L627.5 271.2ZM633.8 267.5L631.8 271L631.9 272.5L634 271.9ZM634.7 267.7L638 272.4L638 274L634.9 272.1ZM641.1 269.9L639.1 272.8L639.2 274.4L641.4 274.3ZM642 270.3L645.3 275.7L645.4 277.3L642.3 274.7ZM648.4 273.9L646.5 276.4L646.6 278L648.7 278.4ZM649.3 274.5L652.7 280.7L652.8 282.2L649.6 279ZM655.8 279.6L653.8 281.6L653.9 283.2L656.1 284ZM656.6 280.3L660 287L660.1 288.6L657 284.8ZM663.1 286.3L661.2 288.1L661.3 289.7L663.4 290.8ZM627.6 273.9L630.9 278L631 279.6L627.8 278.4ZM634.1 274.6L632.1 278.2L632.2 279.8L634.4 279.1ZM635 274.8L638.3 279.6L638.4 281.2L635.2 279.3ZM641.5 277L639.5 280L639.6 281.6L641.8 281.5ZM642.4 277.4L645.7 282.9L645.8 284.5L642.7 281.9ZM648.9 281.1L646.9 283.6L647 285.2L649.2 285.6ZM649.8 281.7L653.2 287.9L653.3 289.5L650.1 286.2ZM656.3 286.7L654.3 288.8L654.4 290.4L656.6 291.2ZM657.2 287.5L660.6 294.2L660.7 295.8L657.5 292ZM663.7 293.5L661.7 295.3L661.9 296.9L664 298ZM627.9 281.2L631.2 285.4L631.3 287L628.1 285.8ZM634.5 281.9L632.4 285.5L632.5 287.1L634.7 286.5ZM635.4 282.1L638.7 286.9L638.8 288.6L635.6 286.7ZM641.9 284.3L639.9 287.3L640 289L642.2 288.8ZM642.8 284.7L646.2 290.2L646.3 291.8L643.1 289.2ZM649.4 288.3L647.4 290.9L647.5 292.5L649.6 292.9ZM650.3 288.9L653.6 295.1L653.7 296.7L650.5 293.5ZM656.8 294L654.8 296.1L654.9 297.7L657.1 298.5ZM657.7 294.7L661.1 301.4L661.2 303L658 299.2ZM664.2 300.7L662.3 302.5L662.4 304.1L664.6 305.2ZM628.2 288.6L631.5 292.8L631.6 294.5L628.4 293.3ZM634.8 289.3L632.7 293L632.8 294.6L635 293.9ZM635.7 289.5L639.1 294.4L639.1 296L635.9 294.1ZM642.3 291.6L640.3 294.8L640.3 296.4L642.6 296.2ZM643.2 292L646.6 297.6L646.7 299.2L643.5 296.6ZM649.8 295.6L647.8 298.3L647.9 299.9L650.1 300.2ZM650.7 296.2L654.1 302.4L654.2 304L651 300.8ZM657.3 301.2L655.3 303.3L655.4 305L657.6 305.7ZM658.2 302L661.7 308.6L661.8 310.2L658.5 306.5ZM664.8 307.9L662.9 309.7L663 311.3L665.2 312.3ZM628.5 296.1L631.8 300.4L631.9 302.1L628.7 300.9ZM635.1 296.8L633 300.5L633.1 302.2L635.3 301.5ZM636.1 297L639.4 301.9L639.5 303.6L636.3 301.7ZM642.7 299.1L640.6 302.3L640.7 304L642.9 303.8ZM643.6 299.5L647 305.1L647.1 306.7L643.9 304.1ZM650.3 303L648.2 305.7L648.3 307.4L650.5 307.6ZM651.2 303.6L654.6 309.8L654.7 311.4L651.5 308.2ZM657.8 308.5L655.8 310.7L655.9 312.3L658.1 313ZM658.7 309.2L662.2 315.8L662.3 317.4L659.1 313.7ZM665.4 315L663.4 316.9L663.5 318.4L665.7 319.4ZM628.8 303.8L632.1 308.1L632.2 309.8L628.9 308.5ZM635.5 304.4L633.4 308.2L633.4 309.9L635.7 309.2ZM636.4 304.6L639.8 309.5L639.9 311.2L636.6 309.4ZM643.1 306.6L641 309.9L641.1 311.6L643.3 311.4ZM644 307L647.4 312.6L647.5 314.2L644.3 311.7ZM650.7 310.5L648.7 313.2L648.8 314.9L651 315.1ZM651.6 311L655.1 317.2L655.2 318.8L651.9 315.7ZM658.3 315.8L656.3 318L656.4 319.6L658.6 320.3ZM659.2 316.5L662.7 323L662.9 324.6L659.6 321ZM666 322.1L664 324L664.1 325.6L666.3 326.5ZM629 311.5L632.4 315.9L632.5 317.6L629.2 316.3ZM635.8 312.1L633.7 316L633.7 317.7L636 316.9ZM636.7 312.3L640.1 317.3L640.2 319L636.9 317.1ZM643.5 314.3L641.4 317.6L641.5 319.3L643.7 319ZM644.4 314.6L647.9 320.2L648 321.9L644.7 319.4ZM651.2 318L649.1 320.8L649.2 322.5L651.4 322.6ZM652.1 318.5L655.6 324.6L655.7 326.2L652.4 323.2ZM658.8 323.1L656.8 325.4L656.9 327L659.2 327.6ZM659.8 323.8L663.3 330.2L663.4 331.8L660.1 328.3ZM666.5 329.2L664.5 331.2L664.6 332.7L666.9 333.6ZM629.3 319.3L632.7 323.7L632.8 325.4L629.5 324.2ZM636.1 319.9L634 323.8L634 325.6L636.3 324.8ZM637.1 320.1L640.5 325L640.6 326.8L637.3 324.9ZM643.9 322L641.8 325.4L641.8 327.1L644.1 326.8ZM644.8 322.3L648.3 327.8L648.4 329.5L645 327.1ZM651.6 325.5L649.5 328.4L649.6 330.1L651.9 330.2ZM652.5 326L656 332L656.2 333.7L652.8 330.7ZM659.3 330.4L657.3 332.8L657.4 334.4L659.7 335ZM660.3 331.1L663.8 337.4L663.9 339L660.6 335.6ZM667.1 336.3L665.1 338.3L665.2 339.9L667.4 340.7ZM629.6 327.2L633 331.6L633.1 333.4L629.8 332.1ZM636.5 327.8L634.3 331.7L634.4 333.5L636.7 332.7ZM637.4 327.9L640.9 332.9L640.9 334.6L637.6 332.8ZM644.3 329.7L642.1 333.2L642.2 334.9L644.5 334.5ZM645.2 330L648.7 335.5L648.8 337.2L645.4 334.9ZM652.1 333.1L649.9 336.1L650 337.8L652.3 337.8ZM653 333.6L656.5 339.5L656.6 341.1L653.3 338.3ZM659.9 337.7L657.8 340.2L657.9 341.9L660.2 342.3ZM660.8 338.4L664.4 344.6L664.5 346.1L661.1 342.9ZM667.7 343.3L665.6 345.4L665.7 347L668 347.7ZM629.9 335.1L633.3 339.6L633.4 341.4L630 340.1ZM636.8 335.7L634.6 339.7L634.7 341.5L637 340.6ZM637.7 335.8L641.2 340.8L641.3 342.5L637.9 340.8ZM644.6 337.5L642.5 341.1L642.6 342.8L644.9 342.4ZM645.6 337.8L649.1 343.2L649.2 345L645.8 342.7ZM652.5 340.7L650.4 343.8L650.5 345.5L652.8 345.4ZM653.4 341.2L657 347L657.1 348.6L653.7 345.9ZM660.4 345.1L658.3 347.7L658.4 349.3L660.7 349.7ZM661.3 345.7L664.9 351.7L665 353.3L661.6 350.2ZM668.2 350.4L666.1 352.6L666.3 354.1L668.6 354.7ZM630.2 343.1L633.6 347.6L633.7 349.4L630.3 348.1ZM637.1 343.7L634.9 347.7L635 349.5L637.3 348.6ZM638.1 343.8L641.6 348.7L641.7 350.5L638.3 348.8ZM645 345.4L642.9 349L642.9 350.8L645.3 350.3ZM646 345.7L649.5 351L649.6 352.7L646.2 350.5ZM652.9 348.3L650.8 351.5L650.9 353.2L653.2 353.1ZM653.9 348.8L657.5 354.5L657.6 356.1L654.2 353.5ZM660.9 352.4L658.7 355.1L658.9 356.8L661.2 357ZM661.8 353L665.4 358.9L665.5 360.5L662.1 357.5ZM668.8 357.4L666.7 359.7L666.8 361.2L669.1 361.7ZM630.4 351.2L633.9 355.7L634 357.5L630.6 356.2ZM637.4 351.7L635.2 355.8L635.3 357.6L637.6 356.7ZM638.4 351.8L641.9 356.7L642 358.5L638.6 356.8ZM645.4 353.3L643.2 357L643.3 358.7L645.7 358.2ZM646.4 353.5L649.9 358.8L650 360.5L646.6 358.4ZM653.4 356L651.2 359.3L651.3 361L653.7 360.8ZM654.3 356.4L657.9 362L658.1 363.7L654.6 361.2ZM661.4 359.8L659.2 362.6L659.3 364.2L661.7 364.4ZM662.3 360.3L666 366.1L666.1 367.6L662.6 364.9ZM669.3 364.4L667.2 366.8L667.4 368.3L669.7 368.7ZM630.7 359.3L634.2 363.8L634.3 365.6L630.9 364.4ZM637.8 359.7L635.5 363.9L635.6 365.7L638 364.8ZM638.7 359.9L642.3 364.7L642.4 366.5L638.9 364.9ZM645.8 361.2L643.6 365L643.7 366.7L646 366.1ZM646.8 361.4L650.4 366.6L650.4 368.4L647 366.3ZM653.8 363.7L651.6 367L651.7 368.8L654.1 368.5ZM654.8 364.1L658.4 369.5L658.5 371.2L655.1 368.8ZM661.9 367.2L659.7 370.1L659.8 371.7L662.2 371.7ZM662.8 367.6L666.5 373.2L666.6 374.8L663.1 372.2ZM669.9 371.3L667.8 373.9L667.9 375.4L670.2 375.6Z" fill="#747474"/>
<path d="M556.9 224.1L563 224L560.1 229.4ZM563.7 224L569.8 223.9L566.9 229ZM570.5 223.8L576.6 223.7L573.8 228.4ZM577.3 223.6L583.4 223.4L580.6 227.6ZM584.1 223.4L590.2 223.1L587.4 226.7ZM590.9 223.1L597 222.8L594.3 225.6ZM597.7 222.8L603.8 222.5L601.1 224.6ZM604.5 222.5L610.6 222.2L608 223.6ZM611.2 222.2L617.4 222L614.8 222.9ZM618 222L624.2 222L621.6 222.5ZM624.8 222L631 222L628.5 222.5ZM631.6 222L637.7 222.3L635.3 223.1ZM638.4 222.3L644.5 222.7L642.1 224.3ZM645.2 222.8L651.3 223.3L649 226.1ZM652 223.4L658.1 224L655.8 228.4ZM556.5 232.4L562.7 232.2L559.8 237.4ZM563.4 232.1L569.6 231.6L566.7 236.8ZM570.3 231.5L576.4 230.7L573.6 235.8ZM577.1 230.6L583.3 229.6L580.5 234.5ZM584 229.5L590.2 228.4L587.4 233ZM590.8 228.3L597 227.1L594.3 231.4ZM597.7 227L603.9 225.8L601.2 229.8ZM604.6 225.7L610.8 224.7L608.1 228.3ZM611.4 224.7L617.6 224L615 227.1ZM618.3 223.9L624.5 223.7L621.9 226.4ZM556.2 240.3L562.4 240L559.4 245.1ZM563.1 239.9L569.3 239.1L566.4 244.4ZM570 239L576.3 237.9L573.4 243.1ZM577 237.8L583.2 236.4L580.4 241.6ZM583.9 236.3L590.1 234.7L587.3 239.7ZM590.8 234.5L597.1 232.9L594.3 237.7ZM597.8 232.7L604 231.1L601.3 235.6ZM604.7 231L610.9 229.6L608.2 233.8ZM611.6 229.5L617.9 228.5L615.2 232.3ZM618.5 228.5L624.8 228.1L622.2 231.5ZM555.8 248L562.1 247.6L559.1 252.7ZM562.8 247.5L569.1 246.6L566.2 251.8ZM569.8 246.5L576.1 245.1L573.2 250.4ZM576.8 245L583.1 243.3L580.2 248.6ZM583.8 243.1L590.1 241.3L587.3 246.5ZM590.8 241.1L597.1 239.1L594.3 244.2ZM597.8 238.9L604.1 237L601.3 241.9ZM604.8 236.8L611.1 235.2L608.4 239.7ZM611.8 235L618.1 233.9L615.4 238ZM618.8 233.8L625.1 233.4L622.4 237.1ZM555.5 255.6L561.8 255.1L558.8 260.2ZM562.6 255L568.9 254L565.9 259.2ZM569.6 253.8L576 252.4L573 257.7ZM576.7 252.2L583 250.3L580.1 255.7ZM583.7 250.1L590.1 248L587.2 253.4ZM590.8 247.8L597.1 245.6L594.3 250.9ZM597.8 245.4L604.2 243.2L601.4 248.3ZM604.9 243L611.3 241.2L608.5 246ZM612 241L618.3 239.7L615.6 244.2ZM619 239.6L625.4 239.1L622.7 243.1ZM555.2 263.1L561.6 262.6L558.5 267.6ZM562.3 262.5L568.7 261.3L565.7 266.6ZM569.4 261.2L575.8 259.6L572.8 265ZM576.5 259.4L582.9 257.4L580 262.9ZM583.6 257.2L590 254.9L587.2 260.4ZM590.8 254.6L597.2 252.3L594.3 257.7ZM597.9 252L604.3 249.7L601.5 255ZM605 249.5L611.4 247.5L608.6 252.5ZM612.1 247.3L618.5 245.9L615.8 250.6ZM619.2 245.8L625.7 245.3L623 249.5ZM554.8 270.5L561.3 269.9L558.2 275ZM562 269.8L568.5 268.6L565.5 273.9ZM569.2 268.5L575.7 266.8L572.7 272.2ZM576.4 266.6L582.8 264.5L579.9 270ZM583.6 264.2L590 261.9L587.1 267.5ZM590.7 261.6L597.2 259.1L594.3 264.7ZM597.9 258.8L604.4 256.4L601.6 261.8ZM605.1 256.1L611.6 254L608.8 259.2ZM612.3 253.8L618.8 252.4L616 257.2ZM619.5 252.3L625.9 251.7L623.2 256.1ZM554.5 277.8L561 277.3L557.9 282.3ZM561.7 277.2L568.3 275.9L565.2 281.2ZM569 275.8L575.5 274L572.5 279.5ZM576.2 273.8L582.8 271.6L579.8 277.2ZM583.5 271.4L590 268.9L587.1 274.6ZM590.7 268.6L597.2 266L594.3 271.7ZM598 265.7L604.5 263.2L601.6 268.8ZM605.2 263L611.7 260.8L608.9 266.2ZM612.5 260.6L619 259.1L616.2 264.1ZM619.7 259L626.2 258.4L623.5 262.9ZM554.2 285.1L560.7 284.5L557.6 289.5ZM561.5 284.4L568.1 283.2L565 288.4ZM568.8 283L575.4 281.2L572.3 286.7ZM576.1 281L582.7 278.8L579.7 284.4ZM583.4 278.5L590 276L587 281.7ZM590.7 275.7L597.3 273.1L594.4 278.8ZM598 272.8L604.6 270.2L601.7 275.9ZM605.3 270L611.9 267.7L609 273.2ZM612.6 267.5L619.2 266L616.4 271.1ZM619.9 265.9L626.5 265.3L623.7 269.9ZM553.8 292.3L560.5 291.8L557.3 296.7ZM561.2 291.7L567.8 290.4L564.8 295.6ZM568.6 290.2L575.2 288.4L572.2 293.9ZM575.9 288.2L582.6 286L579.6 291.6ZM583.3 285.7L589.9 283.2L587 288.9ZM590.7 282.9L597.3 280.2L594.4 286ZM598 279.9L604.7 277.3L601.8 283.1ZM605.4 277.1L612 274.8L609.2 280.4ZM612.8 274.6L619.4 273.1L616.6 278.3ZM620.1 272.9L626.8 272.4L624 277.1ZM553.5 299.6L560.2 299L557.1 303.9ZM561 298.9L567.6 297.6L564.5 302.8ZM568.4 297.4L575.1 295.6L572 301.1ZM575.8 295.4L582.5 293.2L579.4 298.8ZM583.2 292.9L589.9 290.4L586.9 296.2ZM590.7 290.1L597.3 287.4L594.4 293.3ZM598.1 287.1L604.8 284.6L601.8 290.4ZM605.5 284.3L612.2 282.1L609.3 287.7ZM612.9 281.9L619.6 280.3L616.8 285.6ZM620.4 280.2L627.1 279.6L624.2 284.4ZM553.2 306.7L559.9 306.2L556.8 311.1ZM560.7 306.1L567.4 304.8L564.3 310ZM568.2 304.6L574.9 302.8L571.8 308.3ZM575.7 302.6L582.4 300.4L579.3 306.1ZM583.2 300.2L589.9 297.7L586.9 303.4ZM590.6 297.4L597.4 294.7L594.4 300.6ZM598.1 294.4L604.9 291.9L601.9 297.7ZM605.6 291.6L612.4 289.4L609.4 295.1ZM613.1 289.2L619.8 287.7L617 293ZM620.6 287.5L627.3 287L624.5 291.9ZM552.9 313.9L559.7 313.3L556.5 318.2ZM560.4 313.2L567.2 312L564.1 317.2ZM568 311.8L574.8 310L571.6 315.5ZM575.5 309.8L582.3 307.7L579.2 313.3ZM583.1 307.4L589.9 305L586.8 310.7ZM590.6 304.7L597.4 302.1L594.4 308ZM598.2 301.8L605 299.3L602 305.1ZM605.7 299L612.5 296.9L609.6 302.6ZM613.3 296.7L620.1 295.1L617.2 300.6ZM620.8 295L627.6 294.5L624.7 299.4ZM552.6 321L559.4 320.4L556.2 325.3ZM560.2 320.3L567 319.1L563.8 324.3ZM567.8 319L574.6 317.3L571.5 322.7ZM575.4 317L582.2 314.9L579.1 320.5ZM583 314.7L589.8 312.3L586.8 318.1ZM590.6 312L597.4 309.5L594.4 315.4ZM598.2 309.2L605.1 306.8L602.1 312.6ZM605.8 306.5L612.7 304.4L609.7 310.2ZM613.4 304.2L620.3 302.7L617.3 308.2ZM621 302.6L627.9 302.1L625 307.1ZM552.3 328L559.2 327.5L555.9 332.4ZM559.9 327.4L566.8 326.3L563.6 331.4ZM567.6 326.1L574.5 324.5L571.3 329.8ZM575.2 324.3L582.1 322.2L579 327.8ZM582.9 322L589.8 319.7L586.7 325.4ZM590.6 319.4L597.5 317L594.4 322.8ZM598.2 316.7L605.1 314.3L602.1 320.2ZM605.9 314.1L612.8 312L609.8 317.8ZM613.6 311.8L620.5 310.4L617.5 315.9ZM621.2 310.3L628.1 309.8L625.2 314.9ZM551.9 335.1L558.9 334.6L555.6 339.4ZM559.7 334.5L566.6 333.4L563.4 338.5ZM567.4 333.2L574.3 331.7L571.1 337ZM575.1 331.5L582.1 329.5L578.9 335.1ZM582.8 329.3L589.8 327.1L586.7 332.8ZM590.6 326.8L597.5 324.5L594.4 330.3ZM598.3 324.2L605.2 321.9L602.2 327.8ZM606 321.7L613 319.7L610 325.5ZM613.7 319.6L620.7 318.2L617.7 323.7ZM621.5 318.1L628.4 317.6L625.5 322.7ZM551.6 342.1L558.6 341.7L555.3 346.4ZM559.4 341.6L566.4 340.5L563.2 345.6ZM567.2 340.4L574.2 338.9L571 344.1ZM575 338.7L582 336.8L578.8 342.3ZM582.8 336.6L589.8 334.5L586.6 340.2ZM590.5 334.2L597.5 332L594.4 337.8ZM598.3 331.8L605.3 329.6L602.3 335.4ZM606.1 329.4L613.1 327.5L610.1 333.3ZM613.9 327.3L620.9 326L617.9 331.6ZM621.7 325.9L628.7 325.4L625.7 330.6ZM551.3 349.1L558.4 348.7L555 353.5ZM559.2 348.6L566.2 347.6L562.9 352.6ZM567 347.5L574.1 346L570.8 351.3ZM574.8 345.9L581.9 344.1L578.7 349.6ZM582.7 343.9L589.7 341.9L586.6 347.5ZM590.5 341.7L597.6 339.6L594.5 345.3ZM598.4 339.3L605.4 337.3L602.3 343.1ZM606.2 337.1L613.3 335.3L610.2 341.1ZM614.1 335.2L621.1 333.9L618.1 339.5ZM621.9 333.8L629 333.4L626 338.6ZM551 356.1L558.1 355.7L554.8 360.4ZM558.9 355.6L566 354.7L562.7 359.7ZM566.8 354.6L573.9 353.2L570.6 358.4ZM574.7 353.1L581.8 351.4L578.6 356.8ZM582.6 351.2L589.7 349.4L586.5 354.9ZM590.5 349.1L597.6 347.2L594.5 352.9ZM598.4 347L605.5 345.1L602.4 350.8ZM606.3 344.9L613.4 343.2L610.3 348.9ZM614.2 343L621.3 341.9L618.3 347.4ZM622.1 341.8L629.2 341.4L626.2 346.6ZM550.7 363.1L557.8 362.7L554.5 367.4ZM558.6 362.6L565.8 361.8L562.5 366.7ZM566.6 361.7L573.8 360.4L570.5 365.6ZM574.6 360.3L581.7 358.7L578.5 364.1ZM582.5 358.6L589.7 356.8L586.5 362.4ZM590.5 356.6L597.6 354.8L594.5 360.5ZM598.4 354.6L605.6 352.8L602.5 358.6ZM606.4 352.6L613.6 351.1L610.5 356.8ZM614.4 351L621.5 349.9L618.5 355.4ZM622.3 349.8L629.5 349.4L626.5 354.7ZM550.4 370.1L557.6 369.7L554.2 374.4ZM558.4 369.6L565.6 368.8L562.3 373.7ZM566.4 368.7L573.6 367.6L570.3 372.7ZM574.4 367.5L581.6 366.1L578.4 371.3ZM582.4 365.9L589.7 364.3L586.4 369.8ZM590.5 364.1L597.7 362.4L594.5 368.1ZM598.5 362.3L605.7 360.6L602.5 366.3ZM606.5 360.5L613.7 359.1L610.6 364.7ZM614.5 358.9L621.7 358L618.6 363.5ZM622.5 357.9L629.8 357.5L626.7 362.8ZM550.1 377L557.3 376.7L553.9 381.3ZM558.1 376.6L565.4 375.9L562 380.7ZM566.2 375.8L573.5 374.8L570.1 379.8ZM574.3 374.6L581.6 373.4L578.3 378.6ZM582.4 373.2L589.6 371.8L586.4 377.2ZM590.4 371.6L597.7 370.1L594.5 375.7ZM598.5 369.9L605.8 368.5L602.6 374.1ZM606.6 368.3L613.9 367.1L610.7 372.7ZM614.7 366.9L621.9 366.1L618.8 371.6ZM622.8 366L630 365.7L626.9 370.9ZM630.8 365.7L638.1 366.1L635.1 371ZM638.9 366.2L646.2 367.4L643.2 371.9ZM647 367.6L654.3 369.7L651.3 373.7ZM655.1 370L662.3 373L659.4 376.4ZM663.1 373.3L670.4 376.8L667.5 379.8ZM549.8 383.9L557.1 383.6L553.6 388.2ZM557.9 383.6L565.2 382.9L561.8 387.7ZM566 382.8L573.3 381.9L570 386.9ZM574.2 381.8L581.5 380.7L578.2 385.9ZM582.3 380.6L589.6 379.3L586.3 384.6ZM590.4 379.1L597.7 377.8L594.5 383.3ZM598.6 377.6L605.9 376.3L602.7 381.9ZM606.7 376.2L614 375.1L610.8 380.7ZM614.8 375L622.2 374.2L619 379.7ZM623 374.1L630.3 373.8L627.2 379.1ZM631.1 373.8L638.4 374.2L635.4 379.2ZM639.2 374.3L646.6 375.4L643.5 380ZM647.4 375.6L654.7 377.5L651.7 381.6ZM655.5 377.7L662.8 380.3L659.9 383.9ZM663.6 380.6L671 383.7L668 386.9ZM549.4 390.8L556.8 390.6L553.4 395.1ZM557.6 390.5L565 390L561.6 394.7ZM565.8 389.9L573.2 389.1L569.8 394ZM574 389L581.4 388L578 393.1ZM582.2 387.9L589.6 386.8L586.3 392ZM590.4 386.7L597.8 385.5L594.5 390.9ZM598.6 385.4L606 384.2L602.7 389.7ZM606.8 384.1L614.2 383.1L611 388.6ZM615 383L622.4 382.3L619.2 387.8ZM623.2 382.3L630.6 382L627.4 387.3ZM631.4 382L638.7 382.3L635.7 387.4ZM639.6 382.4L646.9 383.4L643.9 388.1ZM647.8 383.5L655.1 385.2L652.1 389.4ZM655.9 385.4L663.3 387.7L660.3 391.4ZM664.1 388L671.5 390.7L668.6 394ZM549.1 397.7L556.6 397.5L553.1 402ZM557.4 397.5L564.8 397L561.4 401.7ZM565.6 396.9L573.1 396.2L569.7 401.1ZM573.9 396.2L581.3 395.3L577.9 400.3ZM582.1 395.2L589.6 394.3L586.2 399.5ZM590.4 394.2L597.8 393.2L594.5 398.5ZM598.6 393.1L606.1 392.1L602.8 397.5ZM606.9 392L614.3 391.2L611.1 396.7ZM615.1 391.1L622.6 390.5L619.4 396ZM623.4 390.5L630.8 390.3L627.7 395.6ZM631.6 390.3L639.1 390.5L636 395.6ZM639.9 390.6L647.3 391.4L644.2 396.2ZM648.1 391.5L655.6 392.9L652.5 397.3ZM656.4 393.1L663.8 395L660.8 399ZM664.6 395.3L672.1 397.6L669.1 401.1ZM548.8 404.6L556.3 404.4L552.8 408.9ZM557.1 404.4L564.6 404L561.1 408.6ZM565.4 403.9L572.9 403.4L569.5 408.2ZM573.8 403.3L581.2 402.6L577.8 407.6ZM582.1 402.6L589.5 401.8L586.2 406.9ZM590.4 401.7L597.8 400.9L594.5 406.1ZM598.7 400.8L606.2 400L602.9 405.4ZM607 399.9L614.5 399.3L611.2 404.7ZM615.3 399.2L622.8 398.7L619.6 404.1ZM623.6 398.7L631.1 398.5L627.9 403.8ZM631.9 398.5L639.4 398.7L636.3 403.9ZM640.2 398.8L647.7 399.4L644.6 404.3ZM648.5 399.5L656 400.7L652.9 405.2ZM656.8 400.8L664.3 402.4L661.3 406.5ZM665.1 402.6L672.6 404.5L669.6 408.2ZM548.5 411.4L556 411.3L552.5 415.8ZM556.9 411.3L564.4 411L560.9 415.6ZM565.3 410.9L572.8 410.5L569.3 415.3ZM573.6 410.5L581.1 410L577.7 414.8ZM582 409.9L589.5 409.3L586.1 414.3ZM590.3 409.2L597.9 408.6L594.5 413.8ZM598.7 408.5L606.2 407.9L602.9 413.2ZM607.1 407.9L614.6 407.4L611.3 412.7ZM615.4 407.3L623 406.9L619.7 412.3ZM623.8 406.9L631.3 406.8L628.1 412.1ZM632.2 406.8L639.7 407L636.6 412.2ZM640.5 407L648.1 407.5L645 412.5ZM648.9 407.6L656.4 408.5L653.4 413.1ZM657.3 408.6L664.8 409.8L661.8 414ZM665.6 409.9L673.2 411.4L670.2 415.2ZM548.2 418.3L555.8 418.2L552.2 422.6ZM556.6 418.2L564.2 418L560.7 422.5ZM565.1 418L572.6 417.7L569.2 422.3ZM573.5 417.6L581.1 417.3L577.6 422.1ZM581.9 417.2L589.5 416.8L586.1 421.8ZM590.3 416.8L597.9 416.4L594.5 421.5ZM598.8 416.3L606.3 415.9L603 421.1ZM607.2 415.9L614.8 415.5L611.5 420.8ZM615.6 415.5L623.2 415.2L619.9 420.6ZM624 415.2L631.6 415.1L628.4 420.5ZM632.4 415.1L640 415.2L636.8 420.5ZM640.9 415.2L648.5 415.6L645.3 420.7ZM649.3 415.7L656.9 416.3L653.8 421.1ZM657.7 416.3L665.3 417.2L662.2 421.6ZM666.1 417.3L673.7 418.2L670.7 422.3ZM547.9 425.1L555.5 425.1L552 429.5ZM556.4 425.1L564 425L560.5 429.5ZM564.9 424.9L572.5 424.8L569 429.4ZM573.3 424.8L581 424.6L577.5 429.3ZM581.8 424.6L589.5 424.4L586 429.3ZM590.3 424.3L597.9 424.1L594.6 429.2ZM598.8 424.1L606.4 423.9L603.1 429.1ZM607.3 423.9L614.9 423.7L611.6 429ZM615.8 423.7L623.4 423.5L620.1 429ZM624.2 423.5L631.9 423.5L628.6 428.9ZM632.7 423.5L640.3 423.5L637.1 428.9ZM641.2 423.6L648.8 423.7L645.7 429ZM649.7 423.8L657.3 424.1L654.2 429.1ZM658.2 424.1L665.8 424.5L662.7 429.2ZM666.6 424.6L674.3 425.1L671.2 429.4Z" fill="#f2f2f2"/>
<path d="M625.4 223.7L631.1 224L628.8 225.7ZM632.2 224.2L638 225.1L635.7 226.6ZM639.1 225.3L644.9 226.9L642.5 228.4ZM646 227.2L651.7 229.4L649.4 231.1ZM652.8 229.8L658.6 232.3L656.3 234.5ZM625.7 228.2L631.5 228.6L629.1 230.7ZM632.6 228.8L638.4 230L636.1 231.8ZM639.5 230.4L645.4 232.5L643 234.1ZM646.5 233L652.3 236L650 237.5ZM653.4 236.6L659.2 240.1L656.9 241.8ZM626 233.5L631.9 234L629.4 236.2ZM633 234.2L638.9 235.7L636.5 237.5ZM640 236.1L645.9 238.7L643.5 240.2ZM647 239.3L652.9 242.8L650.5 244.1ZM654 243.5L659.8 247.8L657.5 249.1ZM626.3 239.3L632.2 239.8L629.8 242.2ZM633.3 240L639.3 241.7L636.8 243.6ZM640.4 242.2L646.3 245.1L643.9 246.6ZM647.5 245.7L653.4 249.7L651 250.9ZM654.5 250.6L660.5 255.3L658.1 256.4ZM626.6 245.4L632.6 246L630.1 248.5ZM633.7 246.2L639.7 248.1L637.2 250ZM640.8 248.6L646.8 251.7L644.4 253.2ZM647.9 252.4L653.9 256.7L651.5 257.8ZM655.1 257.6L661.1 262.7L658.7 263.7ZM626.9 251.9L632.9 252.5L630.4 255.1ZM634.1 252.7L640.1 254.7L637.6 256.7ZM641.2 255.2L647.3 258.5L644.8 259.9ZM648.4 259.2L654.5 263.8L652 264.8ZM655.6 264.7L661.6 270.1L659.2 270.9ZM627.2 258.5L633.3 259.2L630.7 261.9ZM634.4 259.4L640.5 261.5L638 263.5ZM641.7 262L647.7 265.4L645.3 266.9ZM648.9 266.2L655 270.9L652.5 271.9ZM656.1 271.8L662.2 277.4L659.8 278.1ZM627.5 265.4L633.6 266.1L631 268.8ZM634.8 266.4L640.9 268.4L638.4 270.5ZM642.1 268.9L648.2 272.4L645.7 273.9ZM649.4 273.2L655.5 278L653 279ZM656.7 279L662.8 284.7L660.4 285.4ZM627.7 272.5L633.9 273.2L631.3 276ZM635.1 273.4L641.3 275.5L638.7 277.7ZM642.5 276L648.7 279.6L646.1 281.1ZM649.8 280.4L656 285.2L653.5 286.2ZM657.2 286.2L663.4 291.9L660.9 292.6ZM628 279.7L634.3 280.4L631.7 283.3ZM635.5 280.7L641.7 282.7L639.1 285ZM642.9 283.3L649.1 286.8L646.6 288.4ZM650.3 287.6L656.5 292.4L654 293.4ZM657.7 293.4L664 299.1L661.5 299.8ZM628.3 287.1L634.6 287.8L632 290.7ZM635.8 288L642.1 290.1L639.5 292.4ZM643.3 290.6L649.6 294.1L647 295.7ZM650.8 294.9L657.1 299.6L654.5 300.7ZM658.3 300.6L664.5 306.3L662 307ZM628.6 294.6L634.9 295.3L632.3 298.3ZM636.1 295.5L642.5 297.5L639.8 299.9ZM643.7 298L650 301.5L647.4 303.2ZM651.2 302.2L657.6 306.9L655 308ZM658.8 307.9L665.1 313.5L662.6 314.2ZM628.9 302.2L635.3 302.9L632.6 305.9ZM636.5 303.1L642.9 305.1L640.2 307.5ZM644.1 305.6L650.5 308.9L647.8 310.7ZM651.7 309.6L658.1 314.2L655.5 315.4ZM659.3 315.2L665.7 320.6L663.1 321.4ZM629.1 309.9L635.6 310.5L632.9 313.6ZM636.8 310.8L643.3 312.7L640.6 315.2ZM644.5 313.2L650.9 316.4L648.3 318.2ZM652.1 317.1L658.6 321.5L656 322.8ZM659.8 322.4L666.3 327.7L663.7 328.5ZM629.4 317.7L635.9 318.3L633.2 321.5ZM637.2 318.5L643.6 320.4L640.9 322.9ZM644.9 320.8L651.4 323.9L648.7 325.9ZM652.6 324.6L659.1 328.8L656.5 330.2ZM660.3 329.7L666.8 334.8L664.2 335.7ZM629.7 325.6L636.2 326.2L633.5 329.4ZM637.5 326.4L644 328.1L641.3 330.7ZM645.3 328.5L651.8 331.5L649.1 333.5ZM653.1 332.2L659.6 336.2L656.9 337.7ZM660.8 337L667.4 341.8L664.7 342.9ZM630 333.5L636.6 334.1L633.8 337.3ZM637.8 334.3L644.4 335.9L641.7 338.6ZM645.7 336.3L652.3 339.1L649.5 341.2ZM653.5 339.7L660.1 343.5L657.4 345.1ZM661.4 344.3L667.9 348.8L665.3 350ZM630.3 341.5L636.9 342L634.1 345.3ZM638.2 342.2L644.8 343.7L642 346.5ZM646.1 344.1L652.7 346.7L650 349ZM654 347.3L660.6 350.9L657.9 352.6ZM661.9 351.6L668.5 355.9L665.8 357.2ZM630.5 349.6L637.2 350L634.4 353.4ZM638.5 350.2L645.2 351.6L642.4 354.5ZM646.5 352L653.1 354.4L650.4 356.7ZM654.4 355L661.1 358.2L658.4 360.1ZM662.4 358.9L669.1 362.9L666.4 364.3ZM630.8 357.7L637.5 358.1L634.7 361.5ZM638.8 358.3L645.6 359.6L642.8 362.5ZM646.8 359.9L653.6 362.1L650.8 364.5ZM654.9 362.6L661.6 365.6L658.8 367.6ZM662.9 366.3L669.6 369.8L666.9 371.4Z" fill="#c4c4c4"/>
<polyline points="349,295.3 340.3,293.9 332.1,292.5 324.2,291 316.8,289.5 309.9,288 303.3,286.4 297.3,284.8 291.7,283.2 286.7,281.5 282.1,279.8 278,278.1 274.4,276.4 271.3,274.7 268.7,272.9 266.6,271.1 265.1,269.4 264.1,267.6 263.6,265.8 263.6,264 264.2,262.2 265.3,260.4 266.9,258.7 269,256.9 271.6,255.1 274.8,253.4 278.4,251.7 282.6,250 287.2,248.3 292.4,246.6 298,245 304.1,243.4 310.6,241.8 317.7,240.3 325.1,238.8 333,237.4 341.3,235.9 350,234.6 359.2,233.2 368.7,232 378.5,230.7 388.7,229.5 399.3,228.4 410.2,227.3 421.4,226.3 432.9,225.4 444.6,224.4 456.6,223.6 468.9,222.8 481.4,222.1 494,221.4 506.9,220.8 519.9,220.3 533.1,219.9 546.4,219.5 559.8,219.1 573.3,218.9 586.8,218.7 600.4,218.6 614.1,218.5 627.7,218.5 641.3,218.6 654.9,218.8 668.4,219 681.9,219.3 695.2,219.6 708.5,220 721.6,220.5 734.5,221.1 747.3,221.7 759.9,222.4 772.3,223.1 784.5,223.9 796.4,224.8 808,225.7 819.4,226.7 830.5,227.8 841.2,228.9 851.7,230 861.8,231.2 871.5,232.5 880.8,233.8 889.8,235.1 898.4,236.5 906.5,237.9 914.2,239.4 921.5,240.9 928.3,242.5 934.7,244 940.6,245.7 946,247.3 951,249 955.4,250.7 959.4,252.4 962.9,254.1 965.8,255.8 968.2,257.6 970.1,259.4 971.5,261.1 972.4,262.9 972.7,264.7 972.6,266.5 971.9,268.3 970.6,270.1 968.9,271.8 966.6,273.6 963.8,275.4 960.6,277.1 956.8,278.8 952.5,280.5 947.7,282.2 942.4,283.8 936.6,285.4 930.4,287 923.7,288.6 916.6,290.1 909,291.6 901,293 892.6,294.5 883.7,295.8 874.5,297.1" fill="none" stroke="#e8c93c" stroke-width="1.05"/>
<g fill="#e3b820"><circle cx="586" cy="218.7" r="1.5"/><circle cx="723.6" cy="220.6" r="1.5"/><circle cx="449.3" cy="224.1" r="1.5"/><circle cx="283.4" cy="249.7" r="1.5"/><circle cx="263.5" cy="265" r="1.5"/><circle cx="275.8" cy="277.1" r="1.5"/><circle cx="308.7" cy="287.7" r="1.5"/><circle cx="348" cy="295.1" r="1.5"/><circle cx="841.3" cy="228.9" r="1.5"/><circle cx="923.8" cy="241.4" r="1.5"/><circle cx="966.7" cy="256.5" r="1.5"/><circle cx="970.8" cy="269.9" r="1.5"/><circle cx="946.7" cy="282.5" r="1.5"/><circle cx="907" cy="292" r="1.5"/></g>
<circle cx="349" cy="295.3" r="1.9" fill="#e8452c"/><circle cx="874.5" cy="297.1" r="1.9" fill="#ee7d1c"/>
<circle cx="351.5" cy="235.5" r="27" fill="url(#sun)" stroke="#e9a23b" stroke-width="1"/>
<path d="M326 227Q333 214.5 349.5 214.2Q368 214.5 377.6 232" fill="none" stroke="#e9a23b" stroke-width="0.9"/>
<g stroke="#d6d6d6" stroke-width="0.8"><ellipse cx="1133" cy="209.5" rx="39.6" ry="31" fill="#f5f5f5"/><ellipse cx="1133.5" cy="208" rx="30.5" ry="24" fill="#ffffff"/></g>
<ellipse cx="1133" cy="217" rx="19" ry="6" fill="#000" opacity="0.10"/>
<polygon points="1118.4,173.5 1147.8,173.5 1149.2,196.2 1115.8,196.2" fill="#f3f3f3" stroke="#bcbcbc" stroke-width="0.8"/>
<polygon points="1115.8,196.2 1149.2,196.2 1147.5,215.3 1117.2,215.3" fill="url(#cube1)" stroke="#b4b4b4" stroke-width="0.8"/>
<g font-family="Liberation Sans, sans-serif" text-anchor="middle" fill="#5a5a5a"><text x="1133" y="186.8" font-size="5.6" letter-spacing="0.3">TOP</text><text x="1133" y="208.6" font-size="5.2" letter-spacing="0.3">FRONT</text></g>
<g font-family="Liberation Sans, sans-serif" text-anchor="middle" fill="#f0f0f0" stroke="#a4a4a4" stroke-width="0.55" font-size="8.5" font-weight="bold"><text x="1097.5" y="208">W</text><text x="1168.5" y="208.5">E</text><text x="1133" y="240.5">S</text></g>
</svg>
<div class="a" style="left:1186px;top:133px;width:12px;height:586px;background:#f0f0f0"></div>
<div class="a" style="left:1198px;top:133px;width:2px;height:599px;background:#d2d2d2"></div>
<div class="a" style="left:0px;top:133px;width:2px;height:599px;background:#d2d2d2"></div>
<div class="a" style="left:2px;top:719px;width:1196px;height:13px;background:#f0f0f0"></div>
<div class="a" style="left:1188px;top:421px;width:8px;height:11px;background:#c8c8c8"></div>
<div class="a" style="left:713px;top:720px;width:11px;height:9px;background:#c8c8c8"></div>
<svg style="left:1187px;top:137px" width="9" height="7" viewBox="0 0 9 7"><path d="M1.5 5L4.5 2L7.5 5" fill="none" stroke="#444" stroke-width="1.3"/></svg>
<svg style="left:1187px;top:710px" width="9" height="7" viewBox="0 0 9 7"><path d="M1.5 2L4.5 5L7.5 2" fill="none" stroke="#444" stroke-width="1.3"/></svg>
<svg style="left:1176px;top:721px" width="7" height="9" viewBox="0 0 7 9"><path d="M2 1.5L5 4.5L2 7.5" fill="none" stroke="#444" stroke-width="1.3"/></svg>
<svg style="left:255px;top:721px" width="7" height="9" viewBox="0 0 7 9"><path d="M5 1.5L2 4.5L5 7.5" fill="none" stroke="#444" stroke-width="1.3"/></svg>
<div class="t" style="left:20px;top:720px;font-size:7.6px;color:#222">1 : 96</div>
<svg style="left:0;top:718.3px" width="270" height="13" viewBox="0 719 270 13"><rect x="56.5" y="720.5" width="10" height="8" fill="#f5f5f5" stroke="#222" stroke-width="1.1"/><path d="M56.5 720.5L66.5 728.5M66.5 720.5L56.5 728.5" stroke="#222" stroke-width="0.8"/><rect x="59.5" y="722.6" width="4" height="3.6" fill="#f5f5f5" stroke="#222" stroke-width="0.8"/><path d="M71.5 724L74 721.5H81.5L79 724Z" fill="#e8f1fb" stroke="#2f6fb3" stroke-width="0.9"/><rect x="71.5" y="724" width="7.5" height="5" fill="#dbe9f8" stroke="#2f6fb3" stroke-width="0.9"/><path d="M79 724L81.5 721.5V726.5L79 729Z" fill="#a9c8ea" stroke="#2f6fb3" stroke-width="0.9"/><circle cx="88.5" cy="724.5" r="2.4" fill="#ffe04a" stroke="#e8a200" stroke-width="0.8"/><path d="M88.5 720v1.4M88.5 727.6v1.4M84 724.5h1.4M91.6 724.5h1.4M85.3 721.3l1 1M90.7 726.7l1 1M91.7 721.3l-1 1M86.3 726.7l-1 1" stroke="#e8a200" stroke-width="0.9"/><circle cx="103" cy="723.6" r="3" fill="#e3eefb" stroke="#3f7cc0" stroke-width="0.9"/><path d="M101.6 727.3h2.8M100.2 729h5.6" stroke="#555" stroke-width="0.9"/><path d="M112.5 722.5Q111 725 114 727.5H119Q121.5 725 120 722.5Z" fill="#f3f3f3" stroke="#444" stroke-width="0.9"/><path d="M112.5 723L110.5 721.5" stroke="#444" stroke-width="0.9"/><circle cx="121.5" cy="726.5" r="1.6" fill="#dce9f8" stroke="#3f7cc0" stroke-width="0.8"/><path d="M126.5 724.5h4v-3h3.5v3h2.5v3h-10z" fill="#5d8cc4" stroke="#2f5f99" stroke-width="0.7"/><path d="M132 725L136.5 729.5M136.5 725L132 729.5" stroke="#d81e1e" stroke-width="1.3"/><path d="M141.5 724.5h4v-3h3.5v3h2.5v3h-10z" fill="#5d8cc4" stroke="#2f5f99" stroke-width="0.7"/><circle cx="149.5" cy="726.5" r="2" fill="#e6eef8" stroke="#555" stroke-width="0.8"/><path d="M155.5 724.5L160 720.8L164.5 724.5V729H155.5Z" fill="#f3f3f3" stroke="#333" stroke-width="0.9"/><rect x="160.5" y="725.5" width="4.5" height="3.8" fill="#ddd" stroke="#333" stroke-width="0.8"/><path d="M161.6 725.5V724Q162.8 722.8 163.9 724V725.5" fill="none" stroke="#333" stroke-width="0.8"/><path d="M169.5 723L172 726L174 723.5L176.5 727L179.5 723.5" fill="none" stroke="#333" stroke-width="1"/><circle cx="177.5" cy="725.8" r="1.9" fill="#f3f3f3" stroke="#333" stroke-width="0.8"/><circle cx="188" cy="723.8" r="2" fill="#eaf2fc" stroke="#3f7cc0" stroke-width="0.8"/><path d="M188 726v2.6" stroke="#3f7cc0" stroke-width="1"/><rect x="198" y="722" width="8" height="6.5" fill="#f3f3f3" stroke="#222" stroke-width="1" stroke-dasharray="2 0.8"/><rect x="200.5" y="724" width="4" height="3" fill="#333"/><rect x="211" y="722" width="8" height="6.5" fill="#f3f3f3" stroke="#444" stroke-width="0.9"/><path d="M212.5 723.5v4M214.5 723.5v4" stroke="#c22" stroke-width="0.9"/><circle cx="219.5" cy="726" r="2.4" fill="#ffd83a" stroke="#c89600" stroke-width="0.6"/><path d="M226 723.5L229 721.5H234.5V726.5L231.5 729H226Z" fill="#eee" stroke="#333" stroke-width="0.9"/><path d="M228 723.5v5.5M230 723.5v5.5M226 723.5h5.5" stroke="#333" stroke-width="0.7"/><path d="M239.5 721v7.5M239.5 722.5h9.5M249 721v3" stroke="#222" stroke-width="1" fill="none"/><rect x="244.5" y="725.2" width="4.5" height="3.5" fill="#ccc" stroke="#333" stroke-width="0.8"/><path d="M245.6 725.2V724Q246.8 723 247.9 724V725.2" fill="none" stroke="#333" stroke-width="0.7"/></svg>
<div class="a" style="left:0;top:732px;width:1200px;height:18px;background:#d2d2d2"></div>
<div class="t" style="left:4px;top:736px;font-size:7.55px;color:#222">Click to select, TAB for alternates, CTRL adds, SHIFT unselects.</div>
<div class="a" style="left:512px;top:734px;width:138px;height:12.5px;background:#fff"></div>
<div class="a" style="left:723px;top:734px;width:138px;height:12.5px;background:#fff"></div>
<div class="t" style="left:726px;top:736px;font-size:7.8px;color:#999">Main Model</div>
<div class="t" style="left:668px;top:736px;font-size:7.5px;color:#333">:0</div>
<div class="t" style="left:1129px;top:736px;font-size:7.5px;color:#333">:0</div>
<svg style="left:0;top:732px" width="1200" height="18" viewBox="0 732 1200 18"><circle cx="499" cy="738.5" r="2" fill="#e8f0d8" stroke="#5d8a2a" stroke-width="0.9"/><path d="M496 745Q496 741 499 741Q502 741 502 745Z" fill="#8db454" stroke="#5d8a2a" stroke-width="0.7"/><circle cx="504" cy="739.5" r="2" fill="#dbe8f8" stroke="#2f6fb3" stroke-width="0.9"/><path d="M501.5 746Q501.5 742 504 742Q507 742 507 746Z" fill="#7eaadc" stroke="#2f6fb3" stroke-width="0.7"/><path d="M640.5 739.5L643.5 742.5L646.5 739.5" fill="none" stroke="#a5a5a5" stroke-width="1"/><path d="M853.5 739.5L856.5 742.5L859.5 739.5" fill="none" stroke="#a5a5a5" stroke-width="1"/><g opacity="0.55"><path d="M656 745L662 737.5L664.5 739.5L658.5 746.5Z" fill="#ddd" stroke="#777" stroke-width="0.8"/><path d="M655 737.5h5" stroke="#777" stroke-width="1"/></g><rect x="690.5" y="736.5" width="9.5" height="9.5" rx="1" fill="#f4f4f4" stroke="#333" stroke-width="1"/><path d="M692.5 739.5h5.5M692.5 741.5h5.5M692.5 743.5h5.5" stroke="#333" stroke-width="0.8"/><rect x="690.5" y="736.5" width="9.5" height="2" fill="#333"/><g opacity="0.5"><rect x="709" y="737" width="8" height="8" fill="#bbb" stroke="#777" stroke-width="0.8"/><path d="M707 745.5h8" stroke="#666" stroke-width="1.2"/></g><path d="M1015 737.5h8l-2.5 3v4l-3-1.3v-2.7z" fill="#ffe680" stroke="#b8860b" stroke-width="0.8"/><path d="M1016.5 736.2l1 1.2M1021.5 736.2l-1 1.2M1019 735.6v1.6" stroke="#c89600" stroke-width="0.7"/><path d="M1032.5 744.5l3.5-5.5h4.5l-2.5 5.5z" fill="#dbe8f8" stroke="#2f6fb3" stroke-width="0.9"/><path d="M1039 736L1043 740M1043 736L1039 740" stroke="#d81e1e" stroke-width="1.2"/><path d="M1051 737h6v4.5h-6z" fill="#ffd9a0" stroke="#c2701a" stroke-width="0.9"/><path d="M1054 741.5v4M1056 743l2.5 2.5" stroke="#c2701a" stroke-width="0.9"/><path d="M1056.5 736L1060 739.5" stroke="#d81e1e" stroke-width="1.1"/><rect x="1067.5" y="738" width="7" height="7" fill="#dbe8f8" stroke="#2f6fb3" stroke-width="0.9"/><path d="M1072.5 735.5L1076.5 739.5M1076.5 735.5L1072.5 739.5" stroke="#d81e1e" stroke-width="1.2"/><path d="M1087 738v7l2-1.8l1.4 3l1.2-.6l-1.4-2.9h2.6z" fill="#222"/><path d="M1083.5 737.5h3M1085 736v3" stroke="#222" stroke-width="0.9"/><g opacity="0.45"><circle cx="1103.5" cy="741" r="3.3" fill="none" stroke="#666" stroke-width="1.6" stroke-dasharray="1.6 1"/><circle cx="1103.5" cy="741" r="1.2" fill="#888"/></g><path d="M1118.5 737.5h9l-3.3 4v4.2l-2.4-1.2v-3z" fill="#f3f3f3" stroke="#333" stroke-width="1" stroke-linejoin="round"/></svg>
</div></body></html>
